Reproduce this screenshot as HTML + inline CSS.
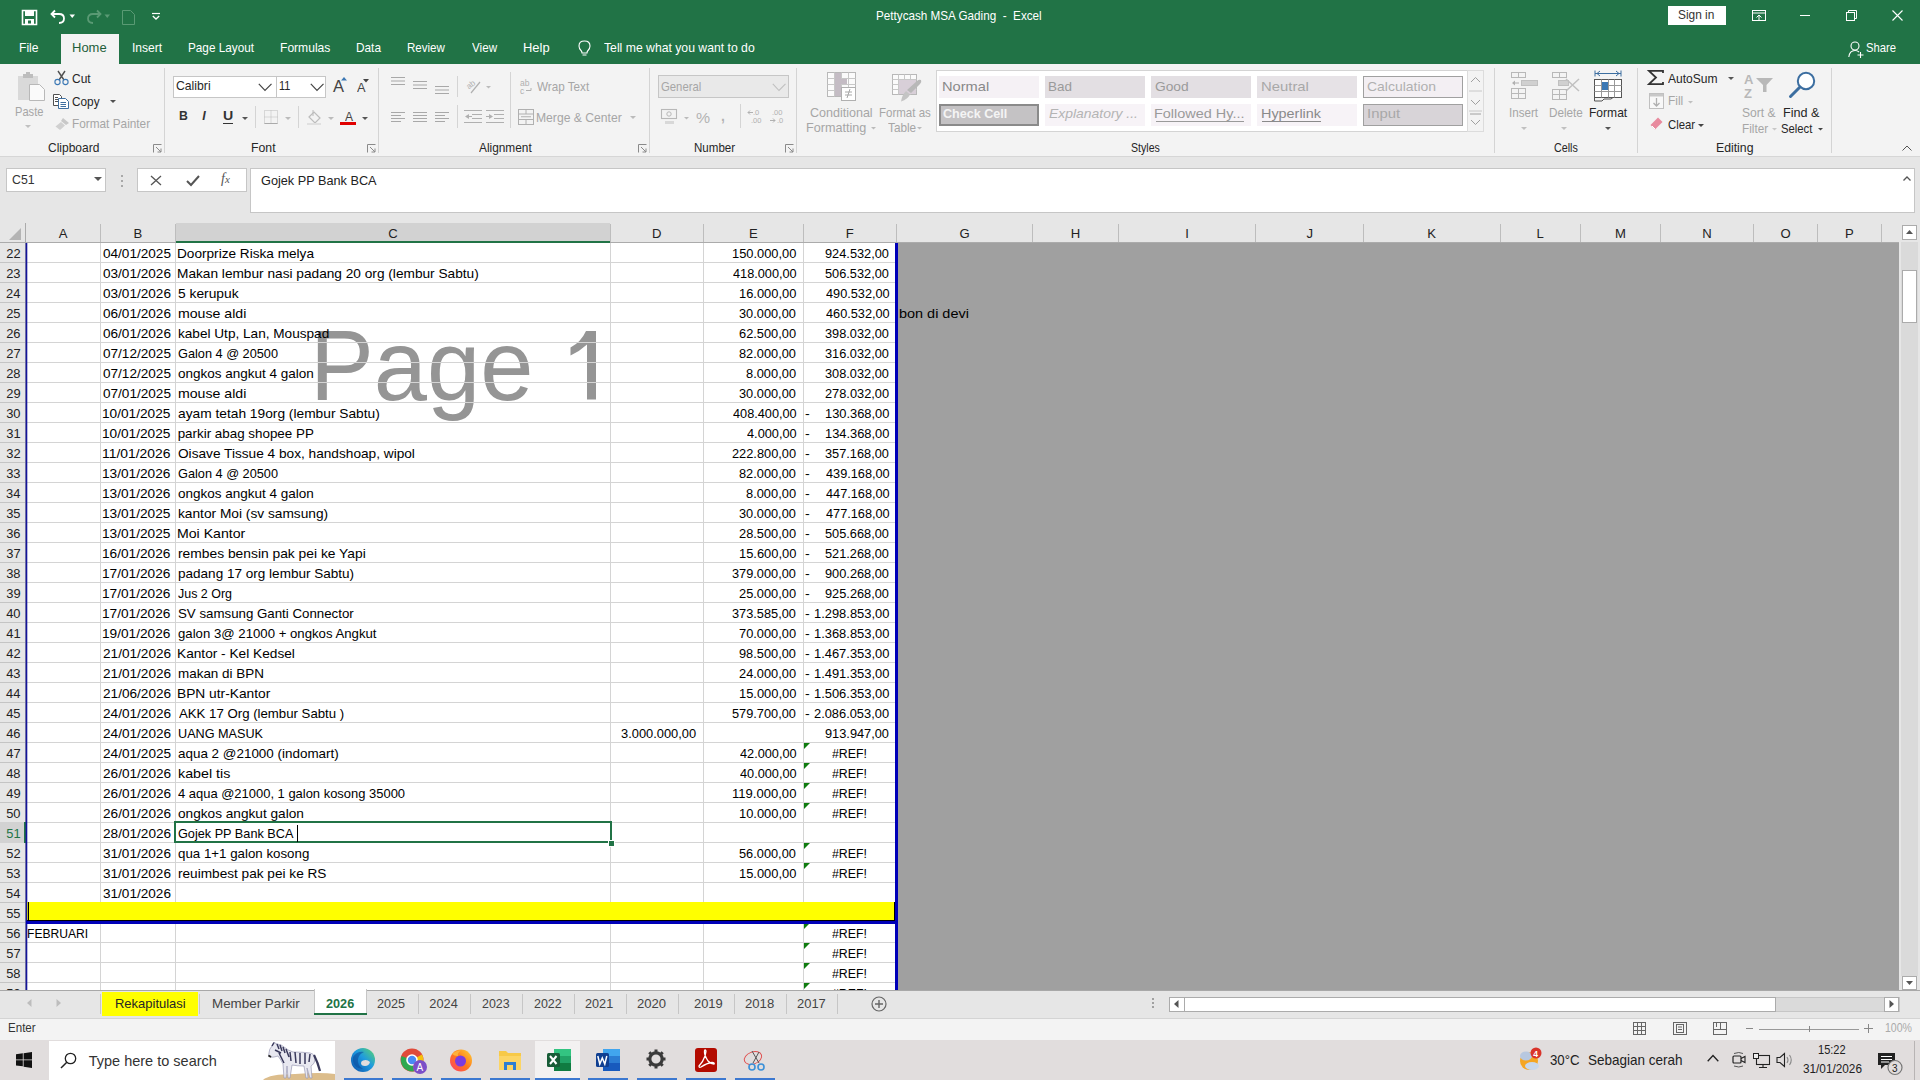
<!DOCTYPE html><html><head><meta charset="utf-8"><style>
html,body{margin:0;padding:0;}
body{width:1920px;height:1080px;overflow:hidden;position:relative;background:#f3f3f3;font-family:"Liberation Sans",sans-serif;}
div{position:absolute;}
.t{position:absolute;white-space:pre;transform-origin:0 0;}
svg{position:absolute;overflow:visible}
</style></head><body>
<div style="left:0px;top:0px;width:1920px;height:64px;background:#217346;"></div>
<div style="left:61px;top:34px;width:58px;height:30px;background:#f3f3f3;"></div>
<div style="left:0px;top:64px;width:1920px;height:92px;background:#f3f3f3;"></div>
<div style="left:0px;top:156px;width:1920px;height:1px;background:#d6d6d6;"></div>
<div style="left:0px;top:157px;width:1920px;height:66px;background:#e6e6e6;"></div>
<div class="t" style="left:876.06px;top:9.66px;font-size:12.80px;line-height:12.80px;color:#ffffff;transform:scaleX(0.9135);">Pettycash MSA Gading  -  Excel</div>
<div style="left:1668px;top:6px;width:58px;height:19px;background:#ffffff;"></div>
<div class="t" style="left:1678.47px;top:9.42px;font-size:12.50px;line-height:12.50px;color:#333;transform:scaleX(0.9508);">Sign in</div>
<div class="t" style="left:19.03px;top:42.16px;font-size:12.80px;line-height:12.80px;color:#ffffff;transform:scaleX(0.9470);">File</div>
<div class="t" style="left:131.91px;top:42.16px;font-size:12.80px;line-height:12.80px;color:#ffffff;transform:scaleX(0.9420);">Insert</div>
<div class="t" style="left:188.06px;top:42.16px;font-size:12.80px;line-height:12.80px;color:#ffffff;transform:scaleX(0.9183);">Page Layout</div>
<div class="t" style="left:280.03px;top:42.16px;font-size:12.80px;line-height:12.80px;color:#ffffff;transform:scaleX(0.9441);">Formulas</div>
<div class="t" style="left:356.05px;top:42.16px;font-size:12.80px;line-height:12.80px;color:#ffffff;transform:scaleX(0.9236);">Data</div>
<div class="t" style="left:407.07px;top:42.16px;font-size:12.80px;line-height:12.80px;color:#ffffff;transform:scaleX(0.9033);">Review</div>
<div class="t" style="left:471.94px;top:42.16px;font-size:12.80px;line-height:12.80px;color:#ffffff;transform:scaleX(0.9105);">View</div>
<div class="t" style="left:522.97px;top:42.16px;font-size:12.80px;line-height:12.80px;color:#ffffff;transform:scaleX(1.0094);">Help</div>
<div class="t" style="left:603.76px;top:42.16px;font-size:12.80px;line-height:12.80px;color:#ffffff;transform:scaleX(0.9543);">Tell me what you want to do</div>
<div class="t" style="left:71.96px;top:42.16px;font-size:12.80px;line-height:12.80px;color:#1e5e3a;transform:scaleX(1.0150);">Home</div>
<div class="t" style="left:1866.49px;top:42.16px;font-size:12.80px;line-height:12.80px;color:#ffffff;transform:scaleX(0.8799);">Share</div>
<div class="t" style="left:48.40px;top:141.50px;font-size:12.40px;line-height:12.40px;color:#262626;transform:scaleX(0.9681);">Clipboard</div>
<div class="t" style="left:250.52px;top:141.50px;font-size:12.40px;line-height:12.40px;color:#262626;transform:scaleX(0.9896);">Font</div>
<div class="t" style="left:479.00px;top:141.50px;font-size:12.40px;line-height:12.40px;color:#262626;transform:scaleX(0.9572);">Alignment</div>
<div class="t" style="left:694.08px;top:141.50px;font-size:12.40px;line-height:12.40px;color:#262626;transform:scaleX(0.9323);">Number</div>
<div class="t" style="left:1130.52px;top:141.50px;font-size:12.40px;line-height:12.40px;color:#262626;transform:scaleX(0.8537);">Styles</div>
<div class="t" style="left:1553.96px;top:141.50px;font-size:12.40px;line-height:12.40px;color:#262626;transform:scaleX(0.8667);">Cells</div>
<div class="t" style="left:1715.62px;top:141.50px;font-size:12.40px;line-height:12.40px;color:#262626;transform:scaleX(0.9894);">Editing</div>
<div style="left:164px;top:68px;width:1px;height:85px;background:#d4d4d4;"></div>
<div style="left:378px;top:68px;width:1px;height:85px;background:#d4d4d4;"></div>
<div style="left:649px;top:68px;width:1px;height:85px;background:#d4d4d4;"></div>
<div style="left:796px;top:68px;width:1px;height:85px;background:#d4d4d4;"></div>
<div style="left:1494px;top:68px;width:1px;height:85px;background:#d4d4d4;"></div>
<div style="left:1637px;top:68px;width:1px;height:85px;background:#d4d4d4;"></div>
<div style="left:1831px;top:68px;width:1px;height:85px;background:#d4d4d4;"></div>
<div class="t" style="left:15.11px;top:106.00px;font-size:12.40px;line-height:12.40px;color:#a6a6a6;transform:scaleX(0.8961);">Paste</div>
<div class="t" style="left:72.40px;top:72.50px;font-size:12.40px;line-height:12.40px;color:#262626;transform:scaleX(0.9677);">Cut</div>
<div class="t" style="left:72.41px;top:95.50px;font-size:12.40px;line-height:12.40px;color:#262626;transform:scaleX(0.9529);">Copy</div>
<div class="t" style="left:72.05px;top:118.00px;font-size:12.40px;line-height:12.40px;color:#a6a6a6;transform:scaleX(0.9531);">Format Painter</div>
<div style="left:173px;top:76px;width:153px;height:22px;background:#ffffff;box-sizing:border-box;border:1px solid #c6c6c6;"></div>
<div style="left:276px;top:76px;width:1px;height:22px;background:#c6c6c6;"></div>
<div class="t" style="left:175.89px;top:80.33px;font-size:12.60px;line-height:12.60px;color:#262626;transform:scaleX(0.9705);">Calibri</div>
<div class="t" style="left:279.18px;top:80.33px;font-size:12.60px;line-height:12.60px;color:#262626;transform:scaleX(0.8674);">11</div>
<div class="t" style="left:536.94px;top:80.50px;font-size:12.40px;line-height:12.40px;color:#a6a6a6;transform:scaleX(0.9424);">Wrap Text</div>
<div class="t" style="left:536.03px;top:111.50px;font-size:12.40px;line-height:12.40px;color:#a6a6a6;transform:scaleX(0.9803);">Merge &amp; Center</div>
<div style="left:658px;top:75px;width:131px;height:23px;background:#e9e9e9;box-sizing:border-box;border:1px solid #c6c6c6;"></div>
<div class="t" style="left:661.43px;top:80.70px;font-size:12.40px;line-height:12.40px;color:#a6a6a6;transform:scaleX(0.9143);">General</div>
<div class="t" style="left:809.77px;top:106.50px;font-size:12.40px;line-height:12.40px;color:#a6a6a6;transform:scaleX(1.0103);">Conditional</div>
<div class="t" style="left:805.99px;top:122.20px;font-size:12.40px;line-height:12.40px;color:#a6a6a6;transform:scaleX(1.0179);">Formatting</div>
<div class="t" style="left:879.08px;top:106.50px;font-size:12.40px;line-height:12.40px;color:#a6a6a6;transform:scaleX(0.9288);">Format as</div>
<div class="t" style="left:887.76px;top:122.20px;font-size:12.40px;line-height:12.40px;color:#a6a6a6;transform:scaleX(0.9504);">Table</div>
<div style="left:936px;top:70px;width:548px;height:62px;background:#ffffff;box-sizing:border-box;border:1px solid #d4d4d4;"></div>
<div style="left:939px;top:76px;width:100px;height:22px;background:#f5f1f5;box-sizing:border-box;"></div>
<div class="t" style="left:942.23px;top:80.53px;font-size:12.60px;line-height:12.60px;color:#888;transform:scaleX(1.1614);">Normal</div>
<div style="left:1045px;top:76px;width:100px;height:22px;background:#e3dfe3;box-sizing:border-box;"></div>
<div class="t" style="left:1048.12px;top:80.53px;font-size:12.60px;line-height:12.60px;color:#9a9a9a;transform:scaleX(1.0679);">Bad</div>
<div style="left:1151px;top:76px;width:100px;height:22px;background:#e3dfe3;box-sizing:border-box;"></div>
<div class="t" style="left:1154.71px;top:80.53px;font-size:12.60px;line-height:12.60px;color:#9a9a9a;transform:scaleX(1.0934);">Good</div>
<div style="left:1257px;top:76px;width:100px;height:22px;background:#e6e2e6;box-sizing:border-box;"></div>
<div class="t" style="left:1260.51px;top:80.53px;font-size:12.60px;line-height:12.60px;color:#a8a8a8;transform:scaleX(1.1795);">Neutral</div>
<div style="left:1363px;top:76px;width:100px;height:22px;background:#f3eff3;box-sizing:border-box;border:1px solid #a0a0a0;"></div>
<div class="t" style="left:1367.20px;top:80.53px;font-size:12.60px;line-height:12.60px;color:#b0b0b0;transform:scaleX(1.1091);">Calculation</div>
<div style="left:939px;top:104px;width:100px;height:22px;background:#c4c2c4;box-sizing:border-box;border:2px double #8a8a8a;"></div>
<div class="t" style="left:942.89px;top:108.43px;font-size:12.60px;line-height:12.60px;color:#f4f4f4;font-weight:bold;">Check Cell</div>
<div style="left:1045px;top:104px;width:100px;height:22px;background:#f7f3f7;box-sizing:border-box;"></div>
<div class="t" style="left:1049.18px;top:108.43px;font-size:12.60px;line-height:12.60px;color:#b4b4b4;font-style:italic;transform:scaleX(1.1053);">Explanatory ...</div>
<div style="left:1151px;top:104px;width:100px;height:22px;background:#f7f3f7;box-sizing:border-box;"></div>
<div class="t" style="left:1154.34px;top:108.43px;font-size:12.60px;line-height:12.60px;color:#9a9a9a;transform:scaleX(1.1468);">Followed Hy...</div>
<div style="left:1155.5px;top:121.1px;width:88.0px;height:1px;background:#9a9a9a;"></div>
<div style="left:1257px;top:104px;width:100px;height:22px;background:#f7f3f7;box-sizing:border-box;"></div>
<div class="t" style="left:1260.55px;top:108.43px;font-size:12.60px;line-height:12.60px;color:#8a8a8a;transform:scaleX(1.1429);">Hyperlink</div>
<div style="left:1261.7px;top:121.1px;width:58.899999999999864px;height:1px;background:#8a8a8a;"></div>
<div style="left:1363px;top:104px;width:100px;height:22px;background:#d8d4d8;box-sizing:border-box;border:1px solid #a0a0a0;"></div>
<div class="t" style="left:1366.56px;top:108.43px;font-size:12.60px;line-height:12.60px;color:#a8a8a8;transform:scaleX(1.1839);">Input</div>
<div style="left:1467px;top:70px;width:17px;height:62px;background:#f3f3f3;box-sizing:border-box;border:1px solid #dcdcdc;"></div>
<svg style="position:absolute;left:1467px;top:70px;" width="17" height="62" viewBox="0 0 17 62"><path d="M4 12 L8.5 7.5 L13 12" stroke="#a0a0a0" fill="none"/><path d="M4 30 L8.5 34.5 L13 30" stroke="#a0a0a0" fill="none"/><line x1="2" y1="21" x2="15" y2="21" stroke="#c8c8c8"/><line x1="2" y1="41" x2="15" y2="41" stroke="#c8c8c8"/><line x1="3" y1="44" x2="14" y2="44" stroke="#a0a0a0"/><path d="M4 50 L8.5 54.5 L13 50" stroke="#a0a0a0" fill="none"/></svg>
<div class="t" style="left:1508.66px;top:106.50px;font-size:12.40px;line-height:12.40px;color:#a6a6a6;transform:scaleX(0.9356);">Insert</div>
<div class="t" style="left:1548.66px;top:106.50px;font-size:12.40px;line-height:12.40px;color:#a6a6a6;transform:scaleX(0.9450);">Delete</div>
<div class="t" style="left:1588.63px;top:106.50px;font-size:12.40px;line-height:12.40px;color:#262626;transform:scaleX(0.9740);">Format</div>
<div class="t" style="left:1668.40px;top:72.50px;font-size:12.40px;line-height:12.40px;color:#262626;transform:scaleX(0.9737);">AutoSum</div>
<div class="t" style="left:1667.54px;top:94.50px;font-size:12.40px;line-height:12.40px;color:#a6a6a6;transform:scaleX(0.9635);">Fill</div>
<div class="t" style="left:1667.83px;top:118.50px;font-size:12.40px;line-height:12.40px;color:#262626;transform:scaleX(0.9142);">Clear</div>
<div class="t" style="left:1742.26px;top:106.50px;font-size:12.40px;line-height:12.40px;color:#a6a6a6;transform:scaleX(0.9743);">Sort &amp;</div>
<div class="t" style="left:1742.06px;top:122.50px;font-size:12.40px;line-height:12.40px;color:#a6a6a6;transform:scaleX(0.9488);">Filter</div>
<div class="t" style="left:1783.39px;top:106.50px;font-size:12.40px;line-height:12.40px;color:#262626;transform:scaleX(1.0185);">Find &amp;</div>
<div class="t" style="left:1781.49px;top:122.50px;font-size:12.40px;line-height:12.40px;color:#262626;transform:scaleX(0.9115);">Select</div>
<div style="left:6px;top:168px;width:100px;height:24px;background:#fff;box-sizing:border-box;border:1px solid #c6c6c6;"></div>
<div style="left:137px;top:168px;width:110px;height:24px;background:#fff;box-sizing:border-box;border:1px solid #c6c6c6;"></div>
<div style="left:250px;top:168px;width:1665px;height:45px;background:#fff;box-sizing:border-box;border:1px solid #c6c6c6;"></div>
<div style="left:0px;top:223px;width:1899px;height:20px;background:#e6e6e6;"></div>
<div style="left:0px;top:243px;width:26px;height:747px;background:#e6e6e6;"></div>
<div style="left:26px;top:243px;width:870px;height:747px;background:#ffffff;"></div>
<div class="t" style="left:309.84px;top:315.35px;font-size:100.00px;line-height:100.00px;color:#959595;transform:scaleX(0.9570);">Page</div>
<svg style="position:absolute;left:560px;top:320px;" width="50" height="90" viewBox="0 0 50 90"><path d="M27 11 L36 11 L36 79.6 L27 79.6 L27 24.5 Q20 31 10.5 35.6 L10.5 27.6 Q21 22 26 11 Z" fill="#959595"/></svg>
<div style="left:898px;top:243px;width:1001px;height:747px;background:#a0a0a0;"></div>
<div style="left:1899px;top:223px;width:21px;height:767px;background:#e6e6e6;"></div>
<div style="left:26px;top:262px;width:870px;height:1px;background:#d4d4d4;"></div>
<div style="left:0px;top:262px;width:25px;height:1px;background:#c4c4c4;"></div>
<div style="left:26px;top:282px;width:870px;height:1px;background:#d4d4d4;"></div>
<div style="left:0px;top:282px;width:25px;height:1px;background:#c4c4c4;"></div>
<div style="left:26px;top:302px;width:870px;height:1px;background:#d4d4d4;"></div>
<div style="left:0px;top:302px;width:25px;height:1px;background:#c4c4c4;"></div>
<div style="left:26px;top:322px;width:870px;height:1px;background:#d4d4d4;"></div>
<div style="left:0px;top:322px;width:25px;height:1px;background:#c4c4c4;"></div>
<div style="left:26px;top:342px;width:870px;height:1px;background:#d4d4d4;"></div>
<div style="left:0px;top:342px;width:25px;height:1px;background:#c4c4c4;"></div>
<div style="left:26px;top:362px;width:870px;height:1px;background:#d4d4d4;"></div>
<div style="left:0px;top:362px;width:25px;height:1px;background:#c4c4c4;"></div>
<div style="left:26px;top:382px;width:870px;height:1px;background:#d4d4d4;"></div>
<div style="left:0px;top:382px;width:25px;height:1px;background:#c4c4c4;"></div>
<div style="left:26px;top:402px;width:870px;height:1px;background:#d4d4d4;"></div>
<div style="left:0px;top:402px;width:25px;height:1px;background:#c4c4c4;"></div>
<div style="left:26px;top:422px;width:870px;height:1px;background:#d4d4d4;"></div>
<div style="left:0px;top:422px;width:25px;height:1px;background:#c4c4c4;"></div>
<div style="left:26px;top:442px;width:870px;height:1px;background:#d4d4d4;"></div>
<div style="left:0px;top:442px;width:25px;height:1px;background:#c4c4c4;"></div>
<div style="left:26px;top:462px;width:870px;height:1px;background:#d4d4d4;"></div>
<div style="left:0px;top:462px;width:25px;height:1px;background:#c4c4c4;"></div>
<div style="left:26px;top:482px;width:870px;height:1px;background:#d4d4d4;"></div>
<div style="left:0px;top:482px;width:25px;height:1px;background:#c4c4c4;"></div>
<div style="left:26px;top:502px;width:870px;height:1px;background:#d4d4d4;"></div>
<div style="left:0px;top:502px;width:25px;height:1px;background:#c4c4c4;"></div>
<div style="left:26px;top:522px;width:870px;height:1px;background:#d4d4d4;"></div>
<div style="left:0px;top:522px;width:25px;height:1px;background:#c4c4c4;"></div>
<div style="left:26px;top:542px;width:870px;height:1px;background:#d4d4d4;"></div>
<div style="left:0px;top:542px;width:25px;height:1px;background:#c4c4c4;"></div>
<div style="left:26px;top:562px;width:870px;height:1px;background:#d4d4d4;"></div>
<div style="left:0px;top:562px;width:25px;height:1px;background:#c4c4c4;"></div>
<div style="left:26px;top:582px;width:870px;height:1px;background:#d4d4d4;"></div>
<div style="left:0px;top:582px;width:25px;height:1px;background:#c4c4c4;"></div>
<div style="left:26px;top:602px;width:870px;height:1px;background:#d4d4d4;"></div>
<div style="left:0px;top:602px;width:25px;height:1px;background:#c4c4c4;"></div>
<div style="left:26px;top:622px;width:870px;height:1px;background:#d4d4d4;"></div>
<div style="left:0px;top:622px;width:25px;height:1px;background:#c4c4c4;"></div>
<div style="left:26px;top:642px;width:870px;height:1px;background:#d4d4d4;"></div>
<div style="left:0px;top:642px;width:25px;height:1px;background:#c4c4c4;"></div>
<div style="left:26px;top:662px;width:870px;height:1px;background:#d4d4d4;"></div>
<div style="left:0px;top:662px;width:25px;height:1px;background:#c4c4c4;"></div>
<div style="left:26px;top:682px;width:870px;height:1px;background:#d4d4d4;"></div>
<div style="left:0px;top:682px;width:25px;height:1px;background:#c4c4c4;"></div>
<div style="left:26px;top:702px;width:870px;height:1px;background:#d4d4d4;"></div>
<div style="left:0px;top:702px;width:25px;height:1px;background:#c4c4c4;"></div>
<div style="left:26px;top:722px;width:870px;height:1px;background:#d4d4d4;"></div>
<div style="left:0px;top:722px;width:25px;height:1px;background:#c4c4c4;"></div>
<div style="left:26px;top:742px;width:870px;height:1px;background:#d4d4d4;"></div>
<div style="left:0px;top:742px;width:25px;height:1px;background:#c4c4c4;"></div>
<div style="left:26px;top:762px;width:870px;height:1px;background:#d4d4d4;"></div>
<div style="left:0px;top:762px;width:25px;height:1px;background:#c4c4c4;"></div>
<div style="left:26px;top:782px;width:870px;height:1px;background:#d4d4d4;"></div>
<div style="left:0px;top:782px;width:25px;height:1px;background:#c4c4c4;"></div>
<div style="left:26px;top:802px;width:870px;height:1px;background:#d4d4d4;"></div>
<div style="left:0px;top:802px;width:25px;height:1px;background:#c4c4c4;"></div>
<div style="left:26px;top:822px;width:870px;height:1px;background:#d4d4d4;"></div>
<div style="left:0px;top:822px;width:25px;height:1px;background:#c4c4c4;"></div>
<div style="left:26px;top:842px;width:870px;height:1px;background:#d4d4d4;"></div>
<div style="left:0px;top:842px;width:25px;height:1px;background:#c4c4c4;"></div>
<div style="left:26px;top:862px;width:870px;height:1px;background:#d4d4d4;"></div>
<div style="left:0px;top:862px;width:25px;height:1px;background:#c4c4c4;"></div>
<div style="left:26px;top:882px;width:870px;height:1px;background:#d4d4d4;"></div>
<div style="left:0px;top:882px;width:25px;height:1px;background:#c4c4c4;"></div>
<div style="left:26px;top:902px;width:870px;height:1px;background:#d4d4d4;"></div>
<div style="left:0px;top:902px;width:25px;height:1px;background:#c4c4c4;"></div>
<div style="left:26px;top:922px;width:870px;height:1px;background:#d4d4d4;"></div>
<div style="left:0px;top:922px;width:25px;height:1px;background:#c4c4c4;"></div>
<div style="left:26px;top:942px;width:870px;height:1px;background:#d4d4d4;"></div>
<div style="left:0px;top:942px;width:25px;height:1px;background:#c4c4c4;"></div>
<div style="left:26px;top:962px;width:870px;height:1px;background:#d4d4d4;"></div>
<div style="left:0px;top:962px;width:25px;height:1px;background:#c4c4c4;"></div>
<div style="left:26px;top:982px;width:870px;height:1px;background:#d4d4d4;"></div>
<div style="left:0px;top:982px;width:25px;height:1px;background:#c4c4c4;"></div>
<div style="left:100px;top:243px;width:1px;height:747px;background:#d4d4d4;"></div>
<div style="left:175px;top:243px;width:1px;height:747px;background:#d4d4d4;"></div>
<div style="left:610px;top:243px;width:1px;height:747px;background:#d4d4d4;"></div>
<div style="left:703px;top:243px;width:1px;height:747px;background:#d4d4d4;"></div>
<div style="left:803px;top:243px;width:1px;height:747px;background:#d4d4d4;"></div>
<div style="left:25px;top:223px;width:1px;height:767px;background:#ababab;"></div>
<div style="left:100px;top:224px;width:1px;height:19px;background:#bdbdbd;"></div>
<div style="left:175px;top:224px;width:1px;height:19px;background:#bdbdbd;"></div>
<div style="left:610px;top:224px;width:1px;height:19px;background:#bdbdbd;"></div>
<div style="left:703px;top:224px;width:1px;height:19px;background:#bdbdbd;"></div>
<div style="left:803px;top:224px;width:1px;height:19px;background:#bdbdbd;"></div>
<div style="left:896px;top:224px;width:1px;height:19px;background:#bdbdbd;"></div>
<div style="left:1032px;top:224px;width:1px;height:19px;background:#bdbdbd;"></div>
<div style="left:1118px;top:224px;width:1px;height:19px;background:#bdbdbd;"></div>
<div style="left:1255px;top:224px;width:1px;height:19px;background:#bdbdbd;"></div>
<div style="left:1363px;top:224px;width:1px;height:19px;background:#bdbdbd;"></div>
<div style="left:1500px;top:224px;width:1px;height:19px;background:#bdbdbd;"></div>
<div style="left:1580px;top:224px;width:1px;height:19px;background:#bdbdbd;"></div>
<div style="left:1660px;top:224px;width:1px;height:19px;background:#bdbdbd;"></div>
<div style="left:1753px;top:224px;width:1px;height:19px;background:#bdbdbd;"></div>
<div style="left:1817px;top:224px;width:1px;height:19px;background:#bdbdbd;"></div>
<div style="left:1881px;top:224px;width:1px;height:19px;background:#bdbdbd;"></div>
<div style="left:0px;top:242px;width:1899px;height:1px;background:#ababab;"></div>
<div style="left:176px;top:223px;width:434px;height:18px;background:#d2d2d2;"></div>
<div style="left:176px;top:241px;width:434px;height:2px;background:#217346;"></div>
<svg style="position:absolute;left:0px;top:223px;" width="25" height="20" viewBox="0 0 25 20"><path d="M9 17 L21 17 L21 5 Z" fill="#b4b4b4"/></svg>
<div class="t" style="left:58.64px;top:226.91px;font-size:13.10px;line-height:13.10px;color:#222;">A</div>
<div class="t" style="left:133.45px;top:226.91px;font-size:13.10px;line-height:13.10px;color:#222;">B</div>
<div class="t" style="left:388.19px;top:226.91px;font-size:13.10px;line-height:13.10px;color:#222;">C</div>
<div class="t" style="left:652.05px;top:226.91px;font-size:13.10px;line-height:13.10px;color:#222;">D</div>
<div class="t" style="left:748.88px;top:226.91px;font-size:13.10px;line-height:13.10px;color:#222;">E</div>
<div class="t" style="left:845.74px;top:226.91px;font-size:13.10px;line-height:13.10px;color:#222;">F</div>
<div class="t" style="left:959.55px;top:226.91px;font-size:13.10px;line-height:13.10px;color:#222;">G</div>
<div class="t" style="left:1070.78px;top:226.91px;font-size:13.10px;line-height:13.10px;color:#222;">H</div>
<div class="t" style="left:1185.20px;top:226.91px;font-size:13.10px;line-height:13.10px;color:#222;">I</div>
<div class="t" style="left:1306.62px;top:226.91px;font-size:13.10px;line-height:13.10px;color:#222;">J</div>
<div class="t" style="left:1427.19px;top:226.91px;font-size:13.10px;line-height:13.10px;color:#222;">K</div>
<div class="t" style="left:1536.54px;top:226.91px;font-size:13.10px;line-height:13.10px;color:#222;">L</div>
<div class="t" style="left:1615.06px;top:226.91px;font-size:13.10px;line-height:13.10px;color:#222;">M</div>
<div class="t" style="left:1702.28px;top:226.91px;font-size:13.10px;line-height:13.10px;color:#222;">N</div>
<div class="t" style="left:1780.42px;top:226.91px;font-size:13.10px;line-height:13.10px;color:#222;">O</div>
<div class="t" style="left:1844.95px;top:226.91px;font-size:13.10px;line-height:13.10px;color:#222;">P</div>
<div class="t" style="left:6.33px;top:248.08px;font-size:12.90px;line-height:12.90px;color:#222;">22</div>
<div class="t" style="left:6.20px;top:268.08px;font-size:12.90px;line-height:12.90px;color:#222;">23</div>
<div class="t" style="left:6.07px;top:288.08px;font-size:12.90px;line-height:12.90px;color:#222;">24</div>
<div class="t" style="left:6.20px;top:308.08px;font-size:12.90px;line-height:12.90px;color:#222;">25</div>
<div class="t" style="left:6.20px;top:328.08px;font-size:12.90px;line-height:12.90px;color:#222;">26</div>
<div class="t" style="left:6.33px;top:348.08px;font-size:12.90px;line-height:12.90px;color:#222;">27</div>
<div class="t" style="left:6.20px;top:368.08px;font-size:12.90px;line-height:12.90px;color:#222;">28</div>
<div class="t" style="left:6.26px;top:388.08px;font-size:12.90px;line-height:12.90px;color:#222;">29</div>
<div class="t" style="left:6.13px;top:408.08px;font-size:12.90px;line-height:12.90px;color:#222;">30</div>
<div class="t" style="left:6.26px;top:428.08px;font-size:12.90px;line-height:12.90px;color:#222;">31</div>
<div class="t" style="left:6.33px;top:448.08px;font-size:12.90px;line-height:12.90px;color:#222;">32</div>
<div class="t" style="left:6.20px;top:468.08px;font-size:12.90px;line-height:12.90px;color:#222;">33</div>
<div class="t" style="left:6.07px;top:488.08px;font-size:12.90px;line-height:12.90px;color:#222;">34</div>
<div class="t" style="left:6.20px;top:508.08px;font-size:12.90px;line-height:12.90px;color:#222;">35</div>
<div class="t" style="left:6.20px;top:528.08px;font-size:12.90px;line-height:12.90px;color:#222;">36</div>
<div class="t" style="left:6.33px;top:548.08px;font-size:12.90px;line-height:12.90px;color:#222;">37</div>
<div class="t" style="left:6.20px;top:568.08px;font-size:12.90px;line-height:12.90px;color:#222;">38</div>
<div class="t" style="left:6.26px;top:588.08px;font-size:12.90px;line-height:12.90px;color:#222;">39</div>
<div class="t" style="left:6.13px;top:608.08px;font-size:12.90px;line-height:12.90px;color:#222;">40</div>
<div class="t" style="left:6.26px;top:628.08px;font-size:12.90px;line-height:12.90px;color:#222;">41</div>
<div class="t" style="left:6.33px;top:648.08px;font-size:12.90px;line-height:12.90px;color:#222;">42</div>
<div class="t" style="left:6.20px;top:668.08px;font-size:12.90px;line-height:12.90px;color:#222;">43</div>
<div class="t" style="left:6.07px;top:688.08px;font-size:12.90px;line-height:12.90px;color:#222;">44</div>
<div class="t" style="left:6.20px;top:708.08px;font-size:12.90px;line-height:12.90px;color:#222;">45</div>
<div class="t" style="left:6.20px;top:728.08px;font-size:12.90px;line-height:12.90px;color:#222;">46</div>
<div class="t" style="left:6.33px;top:748.08px;font-size:12.90px;line-height:12.90px;color:#222;">47</div>
<div class="t" style="left:6.20px;top:768.08px;font-size:12.90px;line-height:12.90px;color:#222;">48</div>
<div class="t" style="left:6.26px;top:788.08px;font-size:12.90px;line-height:12.90px;color:#222;">49</div>
<div class="t" style="left:6.13px;top:808.08px;font-size:12.90px;line-height:12.90px;color:#222;">50</div>
<div style="left:0px;top:822px;width:24px;height:21px;background:#d2d2d2;"></div>
<div style="left:24px;top:822px;width:2px;height:21px;background:#217346;"></div>
<div class="t" style="left:6.26px;top:828.08px;font-size:12.90px;line-height:12.90px;color:#217346;">51</div>
<div class="t" style="left:6.33px;top:848.08px;font-size:12.90px;line-height:12.90px;color:#222;">52</div>
<div class="t" style="left:6.20px;top:868.08px;font-size:12.90px;line-height:12.90px;color:#222;">53</div>
<div class="t" style="left:6.07px;top:888.08px;font-size:12.90px;line-height:12.90px;color:#222;">54</div>
<div class="t" style="left:6.20px;top:908.08px;font-size:12.90px;line-height:12.90px;color:#222;">55</div>
<div class="t" style="left:6.20px;top:928.08px;font-size:12.90px;line-height:12.90px;color:#222;">56</div>
<div class="t" style="left:6.33px;top:948.08px;font-size:12.90px;line-height:12.90px;color:#222;">57</div>
<div class="t" style="left:6.20px;top:968.08px;font-size:12.90px;line-height:12.90px;color:#222;">58</div>
<div class="t" style="left:6.26px;top:988.08px;font-size:12.90px;line-height:12.90px;color:#222;">59</div>
<div style="left:26px;top:902px;width:869px;height:19px;background:#ffff00;"></div>
<div style="left:26px;top:920px;width:869px;height:1px;background:#000;"></div>
<div style="left:894px;top:902px;width:1px;height:19px;background:#000;"></div>
<div style="left:28px;top:902px;width:1px;height:19px;background:#000;"></div>
<div class="t" style="left:102.96px;top:246.66px;font-size:13.40px;line-height:13.40px;color:#000;transform:scaleX(1.0137);">04/01/2025</div>
<div class="t" style="left:177.41px;top:246.66px;font-size:13.40px;line-height:13.40px;color:#000;transform:scaleX(1.0170);">Doorprize Riska melya</div>
<div class="t" style="left:732.03px;top:246.66px;font-size:13.40px;line-height:13.40px;color:#000;transform:scaleX(0.9605);">150.000,00</div>
<div class="t" style="left:825.42px;top:246.66px;font-size:13.40px;line-height:13.40px;color:#000;transform:scaleX(0.9546);">924.532,00</div>
<div class="t" style="left:102.96px;top:266.66px;font-size:13.40px;line-height:13.40px;color:#000;transform:scaleX(1.0137);">03/01/2026</div>
<div class="t" style="left:177.41px;top:266.66px;font-size:13.40px;line-height:13.40px;color:#000;transform:scaleX(1.0211);">Makan lembur nasi padang 20 org (lembur Sabtu)</div>
<div class="t" style="left:732.75px;top:266.66px;font-size:13.40px;line-height:13.40px;color:#000;transform:scaleX(0.9498);">418.000,00</div>
<div class="t" style="left:825.49px;top:266.66px;font-size:13.40px;line-height:13.40px;color:#000;transform:scaleX(0.9536);">506.532,00</div>
<div class="t" style="left:102.96px;top:286.66px;font-size:13.40px;line-height:13.40px;color:#000;transform:scaleX(1.0137);">03/01/2026</div>
<div class="t" style="left:177.95px;top:286.66px;font-size:13.40px;line-height:13.40px;color:#000;transform:scaleX(1.0293);">5 kerupuk</div>
<div class="t" style="left:739.03px;top:286.66px;font-size:13.40px;line-height:13.40px;color:#000;transform:scaleX(0.9629);">16.000,00</div>
<div class="t" style="left:825.75px;top:286.66px;font-size:13.40px;line-height:13.40px;color:#000;transform:scaleX(0.9498);">490.532,00</div>
<div class="t" style="left:102.96px;top:306.66px;font-size:13.40px;line-height:13.40px;color:#000;transform:scaleX(1.0137);">06/01/2026</div>
<div class="t" style="left:177.58px;top:306.66px;font-size:13.40px;line-height:13.40px;color:#000;transform:scaleX(1.0548);">mouse aldi</div>
<div class="t" style="left:739.49px;top:306.66px;font-size:13.40px;line-height:13.40px;color:#000;transform:scaleX(0.9552);">30.000,00</div>
<div class="t" style="left:825.75px;top:306.66px;font-size:13.40px;line-height:13.40px;color:#000;transform:scaleX(0.9498);">460.532,00</div>
<div class="t" style="left:102.96px;top:326.66px;font-size:13.40px;line-height:13.40px;color:#000;transform:scaleX(1.0137);">06/01/2026</div>
<div class="t" style="left:177.62px;top:326.66px;font-size:13.40px;line-height:13.40px;color:#000;transform:scaleX(1.0156);">kabel Utp, Lan, Mouspad</div>
<div class="t" style="left:739.36px;top:326.66px;font-size:13.40px;line-height:13.40px;color:#000;transform:scaleX(0.9574);">62.500,00</div>
<div class="t" style="left:825.49px;top:326.66px;font-size:13.40px;line-height:13.40px;color:#000;transform:scaleX(0.9536);">398.032,00</div>
<div class="t" style="left:102.96px;top:346.66px;font-size:13.40px;line-height:13.40px;color:#000;transform:scaleX(1.0137);">07/12/2025</div>
<div class="t" style="left:177.86px;top:346.66px;font-size:13.40px;line-height:13.40px;color:#000;transform:scaleX(0.9508);">Galon 4 @ 20500</div>
<div class="t" style="left:739.42px;top:346.66px;font-size:13.40px;line-height:13.40px;color:#000;transform:scaleX(0.9563);">82.000,00</div>
<div class="t" style="left:825.49px;top:346.66px;font-size:13.40px;line-height:13.40px;color:#000;transform:scaleX(0.9536);">316.032,00</div>
<div class="t" style="left:102.96px;top:366.66px;font-size:13.40px;line-height:13.40px;color:#000;transform:scaleX(1.0137);">07/12/2025</div>
<div class="t" style="left:177.96px;top:366.66px;font-size:13.40px;line-height:13.40px;color:#000;transform:scaleX(1.0078);">ongkos angkut 4 galon</div>
<div class="t" style="left:746.42px;top:366.66px;font-size:13.40px;line-height:13.40px;color:#000;transform:scaleX(0.9598);">8.000,00</div>
<div class="t" style="left:825.49px;top:366.66px;font-size:13.40px;line-height:13.40px;color:#000;transform:scaleX(0.9536);">308.032,00</div>
<div class="t" style="left:102.96px;top:386.66px;font-size:13.40px;line-height:13.40px;color:#000;transform:scaleX(1.0137);">07/01/2025</div>
<div class="t" style="left:177.58px;top:386.66px;font-size:13.40px;line-height:13.40px;color:#000;transform:scaleX(1.0548);">mouse aldi</div>
<div class="t" style="left:739.49px;top:386.66px;font-size:13.40px;line-height:13.40px;color:#000;transform:scaleX(0.9552);">30.000,00</div>
<div class="t" style="left:825.36px;top:386.66px;font-size:13.40px;line-height:13.40px;color:#000;transform:scaleX(0.9556);">278.032,00</div>
<div class="t" style="left:102.47px;top:406.66px;font-size:13.40px;line-height:13.40px;color:#000;transform:scaleX(1.0210);">10/01/2025</div>
<div class="t" style="left:177.95px;top:406.66px;font-size:13.40px;line-height:13.40px;color:#000;transform:scaleX(1.0270);">ayam tetah 19org (lembur Sabtu)</div>
<div class="t" style="left:732.75px;top:406.66px;font-size:13.40px;line-height:13.40px;color:#000;transform:scaleX(0.9498);">408.400,00</div>
<div class="t" style="left:825.03px;top:406.66px;font-size:13.40px;line-height:13.40px;color:#000;transform:scaleX(0.9605);">130.368,00</div>
<div class="t" style="left:805.36px;top:406.66px;font-size:13.40px;line-height:13.40px;color:#000;transform:scaleX(1.0661);">-</div>
<div class="t" style="left:102.47px;top:426.66px;font-size:13.40px;line-height:13.40px;color:#000;transform:scaleX(1.0210);">10/01/2025</div>
<div class="t" style="left:177.63px;top:426.66px;font-size:13.40px;line-height:13.40px;color:#000;">parkir abag shopee PP</div>
<div class="t" style="left:746.74px;top:426.66px;font-size:13.40px;line-height:13.40px;color:#000;transform:scaleX(0.9535);">4.000,00</div>
<div class="t" style="left:825.03px;top:426.66px;font-size:13.40px;line-height:13.40px;color:#000;transform:scaleX(0.9605);">134.368,00</div>
<div class="t" style="left:805.36px;top:426.66px;font-size:13.40px;line-height:13.40px;color:#000;transform:scaleX(1.0661);">-</div>
<div class="t" style="left:102.46px;top:446.66px;font-size:13.40px;line-height:13.40px;color:#000;transform:scaleX(1.0369);">11/01/2026</div>
<div class="t" style="left:177.88px;top:446.66px;font-size:13.40px;line-height:13.40px;color:#000;transform:scaleX(1.0200);">Oisave Tissue 4 box, handshoap, wipol</div>
<div class="t" style="left:732.36px;top:446.66px;font-size:13.40px;line-height:13.40px;color:#000;transform:scaleX(0.9556);">222.800,00</div>
<div class="t" style="left:825.49px;top:446.66px;font-size:13.40px;line-height:13.40px;color:#000;transform:scaleX(0.9536);">357.168,00</div>
<div class="t" style="left:805.36px;top:446.66px;font-size:13.40px;line-height:13.40px;color:#000;transform:scaleX(1.0661);">-</div>
<div class="t" style="left:102.47px;top:466.66px;font-size:13.40px;line-height:13.40px;color:#000;transform:scaleX(1.0210);">13/01/2026</div>
<div class="t" style="left:177.86px;top:466.66px;font-size:13.40px;line-height:13.40px;color:#000;transform:scaleX(0.9508);">Galon 4 @ 20500</div>
<div class="t" style="left:739.42px;top:466.66px;font-size:13.40px;line-height:13.40px;color:#000;transform:scaleX(0.9563);">82.000,00</div>
<div class="t" style="left:825.75px;top:466.66px;font-size:13.40px;line-height:13.40px;color:#000;transform:scaleX(0.9498);">439.168,00</div>
<div class="t" style="left:805.36px;top:466.66px;font-size:13.40px;line-height:13.40px;color:#000;transform:scaleX(1.0661);">-</div>
<div class="t" style="left:102.47px;top:486.66px;font-size:13.40px;line-height:13.40px;color:#000;transform:scaleX(1.0210);">13/01/2026</div>
<div class="t" style="left:177.96px;top:486.66px;font-size:13.40px;line-height:13.40px;color:#000;transform:scaleX(1.0078);">ongkos angkut 4 galon</div>
<div class="t" style="left:746.42px;top:486.66px;font-size:13.40px;line-height:13.40px;color:#000;transform:scaleX(0.9598);">8.000,00</div>
<div class="t" style="left:825.75px;top:486.66px;font-size:13.40px;line-height:13.40px;color:#000;transform:scaleX(0.9498);">447.168,00</div>
<div class="t" style="left:805.36px;top:486.66px;font-size:13.40px;line-height:13.40px;color:#000;transform:scaleX(1.0661);">-</div>
<div class="t" style="left:102.47px;top:506.66px;font-size:13.40px;line-height:13.40px;color:#000;transform:scaleX(1.0210);">13/01/2025</div>
<div class="t" style="left:177.61px;top:506.66px;font-size:13.40px;line-height:13.40px;color:#000;transform:scaleX(1.0242);">kantor Moi (sv samsung)</div>
<div class="t" style="left:739.49px;top:506.66px;font-size:13.40px;line-height:13.40px;color:#000;transform:scaleX(0.9552);">30.000,00</div>
<div class="t" style="left:825.75px;top:506.66px;font-size:13.40px;line-height:13.40px;color:#000;transform:scaleX(0.9498);">477.168,00</div>
<div class="t" style="left:805.36px;top:506.66px;font-size:13.40px;line-height:13.40px;color:#000;transform:scaleX(1.0661);">-</div>
<div class="t" style="left:102.47px;top:526.66px;font-size:13.40px;line-height:13.40px;color:#000;transform:scaleX(1.0210);">13/01/2025</div>
<div class="t" style="left:177.37px;top:526.66px;font-size:13.40px;line-height:13.40px;color:#000;transform:scaleX(1.0549);">Moi Kantor</div>
<div class="t" style="left:739.36px;top:526.66px;font-size:13.40px;line-height:13.40px;color:#000;transform:scaleX(0.9574);">28.500,00</div>
<div class="t" style="left:825.49px;top:526.66px;font-size:13.40px;line-height:13.40px;color:#000;transform:scaleX(0.9536);">505.668,00</div>
<div class="t" style="left:805.36px;top:526.66px;font-size:13.40px;line-height:13.40px;color:#000;transform:scaleX(1.0661);">-</div>
<div class="t" style="left:102.47px;top:546.66px;font-size:13.40px;line-height:13.40px;color:#000;transform:scaleX(1.0210);">16/01/2026</div>
<div class="t" style="left:177.60px;top:546.66px;font-size:13.40px;line-height:13.40px;color:#000;transform:scaleX(1.0320);">rembes bensin pak pei ke Yapi</div>
<div class="t" style="left:739.03px;top:546.66px;font-size:13.40px;line-height:13.40px;color:#000;transform:scaleX(0.9629);">15.600,00</div>
<div class="t" style="left:825.49px;top:546.66px;font-size:13.40px;line-height:13.40px;color:#000;transform:scaleX(0.9536);">521.268,00</div>
<div class="t" style="left:805.36px;top:546.66px;font-size:13.40px;line-height:13.40px;color:#000;transform:scaleX(1.0661);">-</div>
<div class="t" style="left:102.47px;top:566.66px;font-size:13.40px;line-height:13.40px;color:#000;transform:scaleX(1.0210);">17/01/2026</div>
<div class="t" style="left:177.62px;top:566.66px;font-size:13.40px;line-height:13.40px;color:#000;transform:scaleX(1.0111);">padang 17 org lembur Sabtu)</div>
<div class="t" style="left:732.49px;top:566.66px;font-size:13.40px;line-height:13.40px;color:#000;transform:scaleX(0.9536);">379.000,00</div>
<div class="t" style="left:825.42px;top:566.66px;font-size:13.40px;line-height:13.40px;color:#000;transform:scaleX(0.9546);">900.268,00</div>
<div class="t" style="left:805.36px;top:566.66px;font-size:13.40px;line-height:13.40px;color:#000;transform:scaleX(1.0661);">-</div>
<div class="t" style="left:102.47px;top:586.66px;font-size:13.40px;line-height:13.40px;color:#000;transform:scaleX(1.0210);">17/01/2026</div>
<div class="t" style="left:178.31px;top:586.66px;font-size:13.40px;line-height:13.40px;color:#000;transform:scaleX(0.9295);">Jus 2 Org</div>
<div class="t" style="left:739.36px;top:586.66px;font-size:13.40px;line-height:13.40px;color:#000;transform:scaleX(0.9574);">25.000,00</div>
<div class="t" style="left:825.42px;top:586.66px;font-size:13.40px;line-height:13.40px;color:#000;transform:scaleX(0.9546);">925.268,00</div>
<div class="t" style="left:805.36px;top:586.66px;font-size:13.40px;line-height:13.40px;color:#000;transform:scaleX(1.0661);">-</div>
<div class="t" style="left:102.47px;top:606.66px;font-size:13.40px;line-height:13.40px;color:#000;transform:scaleX(1.0210);">17/01/2026</div>
<div class="t" style="left:177.90px;top:606.66px;font-size:13.40px;line-height:13.40px;color:#000;transform:scaleX(0.9920);">SV samsung Ganti Connector</div>
<div class="t" style="left:732.49px;top:606.66px;font-size:13.40px;line-height:13.40px;color:#000;transform:scaleX(0.9536);">373.585,00</div>
<div class="t" style="left:814.03px;top:606.66px;font-size:13.40px;line-height:13.40px;color:#000;transform:scaleX(0.9638);">1.298.853,00</div>
<div class="t" style="left:805.36px;top:606.66px;font-size:13.40px;line-height:13.40px;color:#000;transform:scaleX(1.0661);">-</div>
<div class="t" style="left:102.47px;top:626.66px;font-size:13.40px;line-height:13.40px;color:#000;transform:scaleX(1.0210);">19/01/2026</div>
<div class="t" style="left:177.97px;top:626.66px;font-size:13.40px;line-height:13.40px;color:#000;transform:scaleX(0.9847);">galon 3@ 21000 + ongkos Angkut</div>
<div class="t" style="left:739.36px;top:626.66px;font-size:13.40px;line-height:13.40px;color:#000;transform:scaleX(0.9574);">70.000,00</div>
<div class="t" style="left:814.03px;top:626.66px;font-size:13.40px;line-height:13.40px;color:#000;transform:scaleX(0.9638);">1.368.853,00</div>
<div class="t" style="left:805.36px;top:626.66px;font-size:13.40px;line-height:13.40px;color:#000;transform:scaleX(1.0661);">-</div>
<div class="t" style="left:102.82px;top:646.66px;font-size:13.40px;line-height:13.40px;color:#000;transform:scaleX(1.0158);">21/01/2026</div>
<div class="t" style="left:177.40px;top:646.66px;font-size:13.40px;line-height:13.40px;color:#000;transform:scaleX(1.0220);">Kantor - Kel Kedsel</div>
<div class="t" style="left:739.42px;top:646.66px;font-size:13.40px;line-height:13.40px;color:#000;transform:scaleX(0.9563);">98.500,00</div>
<div class="t" style="left:814.03px;top:646.66px;font-size:13.40px;line-height:13.40px;color:#000;transform:scaleX(0.9638);">1.467.353,00</div>
<div class="t" style="left:805.36px;top:646.66px;font-size:13.40px;line-height:13.40px;color:#000;transform:scaleX(1.0661);">-</div>
<div class="t" style="left:102.82px;top:666.66px;font-size:13.40px;line-height:13.40px;color:#000;transform:scaleX(1.0158);">21/01/2026</div>
<div class="t" style="left:177.63px;top:666.66px;font-size:13.40px;line-height:13.40px;color:#000;transform:scaleX(1.0038);">makan di BPN</div>
<div class="t" style="left:739.36px;top:666.66px;font-size:13.40px;line-height:13.40px;color:#000;transform:scaleX(0.9574);">24.000,00</div>
<div class="t" style="left:814.03px;top:666.66px;font-size:13.40px;line-height:13.40px;color:#000;transform:scaleX(0.9638);">1.491.353,00</div>
<div class="t" style="left:805.36px;top:666.66px;font-size:13.40px;line-height:13.40px;color:#000;transform:scaleX(1.0661);">-</div>
<div class="t" style="left:102.82px;top:686.66px;font-size:13.40px;line-height:13.40px;color:#000;transform:scaleX(1.0158);">21/06/2026</div>
<div class="t" style="left:177.40px;top:686.66px;font-size:13.40px;line-height:13.40px;color:#000;transform:scaleX(1.0270);">BPN utr-Kantor</div>
<div class="t" style="left:739.03px;top:686.66px;font-size:13.40px;line-height:13.40px;color:#000;transform:scaleX(0.9629);">15.000,00</div>
<div class="t" style="left:814.03px;top:686.66px;font-size:13.40px;line-height:13.40px;color:#000;transform:scaleX(0.9638);">1.506.353,00</div>
<div class="t" style="left:805.36px;top:686.66px;font-size:13.40px;line-height:13.40px;color:#000;transform:scaleX(1.0661);">-</div>
<div class="t" style="left:102.82px;top:706.66px;font-size:13.40px;line-height:13.40px;color:#000;transform:scaleX(1.0158);">24/01/2026</div>
<div class="t" style="left:178.50px;top:706.66px;font-size:13.40px;line-height:13.40px;color:#000;transform:scaleX(0.9864);">AKK 17 Org (lembur Sabtu )</div>
<div class="t" style="left:732.49px;top:706.66px;font-size:13.40px;line-height:13.40px;color:#000;transform:scaleX(0.9536);">579.700,00</div>
<div class="t" style="left:814.36px;top:706.66px;font-size:13.40px;line-height:13.40px;color:#000;transform:scaleX(0.9596);">2.086.053,00</div>
<div class="t" style="left:805.36px;top:706.66px;font-size:13.40px;line-height:13.40px;color:#000;transform:scaleX(1.0661);">-</div>
<div class="t" style="left:102.82px;top:726.66px;font-size:13.40px;line-height:13.40px;color:#000;transform:scaleX(1.0158);">24/01/2026</div>
<div class="t" style="left:177.55px;top:726.66px;font-size:13.40px;line-height:13.40px;color:#000;transform:scaleX(0.9448);">UANG MASUK</div>
<div class="t" style="left:825.42px;top:726.66px;font-size:13.40px;line-height:13.40px;color:#000;transform:scaleX(0.9546);">913.947,00</div>
<div class="t" style="left:102.82px;top:746.66px;font-size:13.40px;line-height:13.40px;color:#000;transform:scaleX(1.0158);">24/01/2025</div>
<div class="t" style="left:177.96px;top:746.66px;font-size:13.40px;line-height:13.40px;color:#000;transform:scaleX(1.0032);">aqua 2 @21000 (indomart)</div>
<div class="t" style="left:739.75px;top:746.66px;font-size:13.40px;line-height:13.40px;color:#000;transform:scaleX(0.9509);">42.000,00</div>
<div class="t" style="left:832.44px;top:746.66px;font-size:13.40px;line-height:13.40px;color:#000;transform:scaleX(0.9223);">#REF!</div>
<svg style="position:absolute;left:804px;top:743px;" width="6" height="6" viewBox="0 0 6 6"><path d="M0 0 L6 0 L0 6 Z" fill="#107c10"/></svg>
<div class="t" style="left:102.82px;top:766.66px;font-size:13.40px;line-height:13.40px;color:#000;transform:scaleX(1.0158);">26/01/2026</div>
<div class="t" style="left:177.57px;top:766.66px;font-size:13.40px;line-height:13.40px;color:#000;transform:scaleX(1.0661);">kabel tis</div>
<div class="t" style="left:739.75px;top:766.66px;font-size:13.40px;line-height:13.40px;color:#000;transform:scaleX(0.9509);">40.000,00</div>
<div class="t" style="left:832.44px;top:766.66px;font-size:13.40px;line-height:13.40px;color:#000;transform:scaleX(0.9223);">#REF!</div>
<svg style="position:absolute;left:804px;top:763px;" width="6" height="6" viewBox="0 0 6 6"><path d="M0 0 L6 0 L0 6 Z" fill="#107c10"/></svg>
<div class="t" style="left:102.82px;top:786.66px;font-size:13.40px;line-height:13.40px;color:#000;transform:scaleX(1.0158);">26/01/2026</div>
<div class="t" style="left:178.24px;top:786.66px;font-size:13.40px;line-height:13.40px;color:#000;transform:scaleX(0.9673);">4 aqua @21000, 1 galon kosong 35000</div>
<div class="t" style="left:732.02px;top:786.66px;font-size:13.40px;line-height:13.40px;color:#000;transform:scaleX(0.9754);">119.000,00</div>
<div class="t" style="left:832.44px;top:786.66px;font-size:13.40px;line-height:13.40px;color:#000;transform:scaleX(0.9223);">#REF!</div>
<svg style="position:absolute;left:804px;top:783px;" width="6" height="6" viewBox="0 0 6 6"><path d="M0 0 L6 0 L0 6 Z" fill="#107c10"/></svg>
<div class="t" style="left:102.82px;top:806.66px;font-size:13.40px;line-height:13.40px;color:#000;transform:scaleX(1.0158);">26/01/2026</div>
<div class="t" style="left:177.95px;top:806.66px;font-size:13.40px;line-height:13.40px;color:#000;transform:scaleX(1.0182);">ongkos angkut galon</div>
<div class="t" style="left:739.03px;top:806.66px;font-size:13.40px;line-height:13.40px;color:#000;transform:scaleX(0.9629);">10.000,00</div>
<div class="t" style="left:832.44px;top:806.66px;font-size:13.40px;line-height:13.40px;color:#000;transform:scaleX(0.9223);">#REF!</div>
<svg style="position:absolute;left:804px;top:803px;" width="6" height="6" viewBox="0 0 6 6"><path d="M0 0 L6 0 L0 6 Z" fill="#107c10"/></svg>
<div class="t" style="left:102.82px;top:826.66px;font-size:13.40px;line-height:13.40px;color:#000;transform:scaleX(1.0158);">28/01/2026</div>
<div class="t" style="left:177.87px;top:826.66px;font-size:13.40px;line-height:13.40px;color:#000;transform:scaleX(0.9472);">Gojek PP Bank BCA</div>
<div class="t" style="left:102.96px;top:846.66px;font-size:13.40px;line-height:13.40px;color:#000;transform:scaleX(1.0137);">31/01/2026</div>
<div class="t" style="left:177.97px;top:846.66px;font-size:13.40px;line-height:13.40px;color:#000;transform:scaleX(0.9935);">qua 1+1 galon kosong</div>
<div class="t" style="left:739.49px;top:846.66px;font-size:13.40px;line-height:13.40px;color:#000;transform:scaleX(0.9552);">56.000,00</div>
<div class="t" style="left:832.44px;top:846.66px;font-size:13.40px;line-height:13.40px;color:#000;transform:scaleX(0.9223);">#REF!</div>
<svg style="position:absolute;left:804px;top:843px;" width="6" height="6" viewBox="0 0 6 6"><path d="M0 0 L6 0 L0 6 Z" fill="#107c10"/></svg>
<div class="t" style="left:102.96px;top:866.66px;font-size:13.40px;line-height:13.40px;color:#000;transform:scaleX(1.0137);">31/01/2026</div>
<div class="t" style="left:177.61px;top:866.66px;font-size:13.40px;line-height:13.40px;color:#000;transform:scaleX(1.0176);">reuimbest pak pei ke RS</div>
<div class="t" style="left:739.03px;top:866.66px;font-size:13.40px;line-height:13.40px;color:#000;transform:scaleX(0.9629);">15.000,00</div>
<div class="t" style="left:832.44px;top:866.66px;font-size:13.40px;line-height:13.40px;color:#000;transform:scaleX(0.9223);">#REF!</div>
<svg style="position:absolute;left:804px;top:863px;" width="6" height="6" viewBox="0 0 6 6"><path d="M0 0 L6 0 L0 6 Z" fill="#107c10"/></svg>
<div class="t" style="left:102.96px;top:886.66px;font-size:13.40px;line-height:13.40px;color:#000;transform:scaleX(1.0137);">31/01/2026</div>
<div class="t" style="left:620.79px;top:726.66px;font-size:13.40px;line-height:13.40px;color:#000;transform:scaleX(0.9605);">3.000.000,00</div>
<div class="t" style="left:27.33px;top:926.66px;font-size:13.40px;line-height:13.40px;color:#000;transform:scaleX(0.9044);">FEBRUARI</div>
<div class="t" style="left:898.56px;top:306.66px;font-size:13.40px;line-height:13.40px;color:#000;transform:scaleX(1.0786);">bon di devi</div>
<div class="t" style="left:832.44px;top:926.66px;font-size:13.40px;line-height:13.40px;color:#000;transform:scaleX(0.9223);">#REF!</div>
<svg style="position:absolute;left:804px;top:923px;" width="6" height="6" viewBox="0 0 6 6"><path d="M0 0 L6 0 L0 6 Z" fill="#107c10"/></svg>
<div class="t" style="left:832.44px;top:946.66px;font-size:13.40px;line-height:13.40px;color:#000;transform:scaleX(0.9223);">#REF!</div>
<svg style="position:absolute;left:804px;top:943px;" width="6" height="6" viewBox="0 0 6 6"><path d="M0 0 L6 0 L0 6 Z" fill="#107c10"/></svg>
<div class="t" style="left:832.44px;top:966.66px;font-size:13.40px;line-height:13.40px;color:#000;transform:scaleX(0.9223);">#REF!</div>
<svg style="position:absolute;left:804px;top:963px;" width="6" height="6" viewBox="0 0 6 6"><path d="M0 0 L6 0 L0 6 Z" fill="#107c10"/></svg>
<div class="t" style="left:832.44px;top:986.66px;font-size:13.40px;line-height:13.40px;color:#000;transform:scaleX(0.9223);">#REF!</div>
<svg style="position:absolute;left:804px;top:983px;" width="6" height="6" viewBox="0 0 6 6"><path d="M0 0 L6 0 L0 6 Z" fill="#107c10"/></svg>
<div style="left:895px;top:243px;width:3px;height:747px;background:#0000b8;"></div>
<svg style="position:absolute;left:0px;top:243px;" width="30" height="747" viewBox="0 0 30 747"><rect x="25.6" y="0" width="1.7" height="747" fill="#14149a"/></svg>
<div style="left:26px;top:921px;width:872px;height:3px;background:#0000b8;"></div>
<div style="left:174px;top:821px;width:438px;height:22px;background:transparent;box-sizing:border-box;border:2px solid #217346;"></div>
<div style="left:608px;top:840px;width:5px;height:5px;background:#217346;border:1px solid #fff;"></div>
<div style="left:297px;top:825px;width:1px;height:17px;background:#000;"></div>
<div style="left:0px;top:990px;width:1920px;height:28px;background:#e6e6e6;"></div>
<div style="left:0px;top:1018px;width:1920px;height:22px;background:#f3f3f3;"></div>
<div style="left:0px;top:1018px;width:1920px;height:1px;background:#d4d4d4;"></div>
<div style="left:0px;top:1040px;width:1920px;height:40px;background:#e1dddd;"></div>
<div style="left:49px;top:1041px;width:286px;height:39px;background:#ffffff;"></div>
<svg style="position:absolute;left:22px;top:10px;" width="15" height="15" viewBox="0 0 15 15"><path d="M0.5 0.5 H14.5 V14.5 H0.5 Z" fill="none" stroke="#fff" stroke-width="1.6"/><rect x="3" y="1" width="9" height="5" fill="#fff"/><rect x="3" y="9" width="9" height="5.5" fill="#fff"/><rect x="6" y="10.5" width="3" height="3" fill="#217346"/></svg>
<svg style="position:absolute;left:50px;top:9px;" width="16" height="16" viewBox="0 0 16 16"><path d="M5 1.5 L1.5 5 L5 8.5" fill="none" stroke="#fff" stroke-width="1.8"/><path d="M2 5 H9 Q14 5 14 9.5 Q14 14 9 14" fill="none" stroke="#fff" stroke-width="1.8"/></svg>
<svg style="position:absolute;left:69px;top:14px;" width="7" height="5" viewBox="0 0 7 5"><path d="M0.5 0.5 L6 0.5 L3.25 4 Z" fill="#fff"/></svg>
<svg style="position:absolute;left:86px;top:9px;" width="16" height="16" viewBox="0 0 16 16"><path d="M11 1.5 L14.5 5 L11 8.5" fill="none" stroke="#5a9a74" stroke-width="1.8"/><path d="M14 5 H7 Q2 5 2 9.5 Q2 14 7 14" fill="none" stroke="#5a9a74" stroke-width="1.8"/></svg>
<svg style="position:absolute;left:104px;top:14px;" width="7" height="5" viewBox="0 0 7 5"><path d="M0.5 0.5 L6 0.5 L3.25 4 Z" fill="#5a9a74"/></svg>
<svg style="position:absolute;left:122px;top:10px;" width="13" height="15" viewBox="0 0 13 15"><path d="M0.5 0.5 H8.5 L12.5 4.5 V14.5 H0.5 Z" fill="none" stroke="#5a9a74"/></svg>
<svg style="position:absolute;left:152px;top:10px;" width="9" height="10" viewBox="0 0 9 10"><line x1="0" y1="3.5" x2="8" y2="3.5" stroke="#fff" stroke-width="1.2"/><path d="M0.8 6 L4 9 L7.2 6" fill="none" stroke="#fff" stroke-width="1.3"/></svg>
<svg style="position:absolute;left:1752px;top:10px;" width="14" height="11" viewBox="0 0 14 11"><rect x="0.5" y="0.5" width="13" height="10" fill="none" stroke="#fff"/><line x1="0.5" y1="3" x2="13.5" y2="3" stroke="#fff"/><path d="M4.5 7.5 L7 5 L9.5 7.5 M7 5 V10" fill="none" stroke="#fff"/></svg>
<div style="left:1800px;top:15px;width:10px;height:1px;background:#fff;"></div>
<svg style="position:absolute;left:1846px;top:10px;" width="11" height="11" viewBox="0 0 11 11"><rect x="0.5" y="2.5" width="8" height="8" fill="none" stroke="#fff"/><path d="M2.5 2.5 V0.5 H10.5 V8.5 H8.5" fill="none" stroke="#fff"/></svg>
<svg style="position:absolute;left:1892px;top:10px;" width="11" height="11" viewBox="0 0 11 11"><path d="M0.5 0.5 L10.5 10.5 M10.5 0.5 L0.5 10.5" stroke="#fff" stroke-width="1.1"/></svg>
<svg style="position:absolute;left:1848px;top:41px;" width="17" height="17" viewBox="0 0 17 17"><circle cx="7" cy="5" r="4" fill="none" stroke="#fff" stroke-width="1.1"/><path d="M0.8 16 Q1.5 9.5 7 9.5 Q9.5 9.5 11 11" fill="none" stroke="#fff" stroke-width="1.1"/><path d="M12.5 11 V17 M9.5 14 H15.5" stroke="#fff" stroke-width="1.1"/></svg>
<svg style="position:absolute;left:578px;top:40px;" width="13" height="17" viewBox="0 0 13 17"><path d="M6.5 1 Q1 1 1 6 Q1 8.5 3 10.5 Q4 11.5 4 13 H9 Q9 11.5 10 10.5 Q12 8.5 12 6 Q12 1 6.5 1 Z" fill="none" stroke="#fff" stroke-width="1.1"/><line x1="4.5" y1="15" x2="8.5" y2="15" stroke="#fff"/></svg>
<svg style="position:absolute;left:17px;top:72px;" width="29" height="30" viewBox="0 0 29 30"><rect x="1" y="4" width="20" height="24" fill="#d9d9d9"/><rect x="6" y="2" width="10" height="4" fill="#bdbdbd"/><rect x="9" y="0" width="4" height="3" fill="#bdbdbd"/><path d="M12.5 12.5 H22.5 L27.5 17.5 V28.5 H12.5 Z" fill="#fafafa" stroke="#b8b8b8"/></svg>
<svg style="position:absolute;left:25px;top:125px;" width="7" height="5" viewBox="0 0 7 5"><path d="M0 0 H6 L3 3 Z" fill="#c0c0c0"/></svg>
<svg style="position:absolute;left:54px;top:71px;" width="15" height="14" viewBox="0 0 15 14"><path d="M4 0 L10 9 M11 0 L5 9" stroke="#505050" stroke-width="1.4"/><circle cx="3.5" cy="11" r="2.6" fill="none" stroke="#3c78b4" stroke-width="1.1"/><circle cx="11.5" cy="11" r="2.6" fill="none" stroke="#3c78b4" stroke-width="1.1"/></svg>
<svg style="position:absolute;left:53px;top:94px;" width="16" height="15" viewBox="0 0 16 15"><path d="M0.5 0.5 H6.5 L8.5 2.5 V11.5 H0.5 Z" fill="#fff" stroke="#505050"/><path d="M5.5 4.5 H12.5 L15.5 7.5 V14.5 H5.5 Z" fill="#fff" stroke="#3f6fa0"/><path d="M7.5 8.5 H13 M7.5 10.5 H13 M7.5 12.5 H13" stroke="#3f6fa0"/><path d="M2 3.5 H5 M2 5.5 H5 M2 7.5 H5" stroke="#505050"/></svg>
<svg style="position:absolute;left:110px;top:100px;" width="6" height="4" viewBox="0 0 6 4"><path d="M0 0 H6 L3 3 Z" fill="#505050"/></svg>
<svg style="position:absolute;left:54px;top:117px;" width="16" height="14" viewBox="0 0 16 14"><path d="M9 1 L15 6 L12 8 L7 4 Z" fill="#c8c8c8"/><path d="M7 5 L11 8.5 L6 13 L1.5 9.5 Z" fill="#d0d0d0"/></svg>
<svg style="position:absolute;left:153px;top:144px;" width="9" height="9" viewBox="0 0 9 9"><path d="M0.5 8.5 V0.5 H8.5" fill="none" stroke="#8a8a8a"/><path d="M3 3 L8 8 M8 4.5 V8 H4.5" fill="none" stroke="#8a8a8a"/></svg>
<svg style="position:absolute;left:367px;top:144px;" width="9" height="9" viewBox="0 0 9 9"><path d="M0.5 8.5 V0.5 H8.5" fill="none" stroke="#8a8a8a"/><path d="M3 3 L8 8 M8 4.5 V8 H4.5" fill="none" stroke="#8a8a8a"/></svg>
<svg style="position:absolute;left:638px;top:144px;" width="9" height="9" viewBox="0 0 9 9"><path d="M0.5 8.5 V0.5 H8.5" fill="none" stroke="#8a8a8a"/><path d="M3 3 L8 8 M8 4.5 V8 H4.5" fill="none" stroke="#8a8a8a"/></svg>
<svg style="position:absolute;left:785px;top:144px;" width="9" height="9" viewBox="0 0 9 9"><path d="M0.5 8.5 V0.5 H8.5" fill="none" stroke="#8a8a8a"/><path d="M3 3 L8 8 M8 4.5 V8 H4.5" fill="none" stroke="#8a8a8a"/></svg>
<svg style="position:absolute;left:258px;top:83px;" width="15" height="9" viewBox="0 0 15 9"><path d="M0.8 0.8 L7 7.5 L13.5 0.8" fill="none" stroke="#444" stroke-width="1.2"/></svg>
<svg style="position:absolute;left:310px;top:83px;" width="15" height="9" viewBox="0 0 15 9"><path d="M0.8 0.8 L7 7.5 L13.5 0.8" fill="none" stroke="#444" stroke-width="1.2"/></svg>
<div class="t" style="left:333.00px;top:78.03px;font-size:16.50px;line-height:16.50px;color:#444;">A</div>
<svg style="position:absolute;left:341px;top:77px;" width="6" height="4" viewBox="0 0 6 4"><path d="M0 3.5 L3 0 L6 3.5 Z" fill="#3c78b4"/></svg>
<div class="t" style="left:356.50px;top:81.00px;font-size:13.00px;line-height:13.00px;color:#444;transform:scaleX(0.9832);">A</div>
<svg style="position:absolute;left:363px;top:79px;" width="6" height="4" viewBox="0 0 6 4"><path d="M0 0 L6 0 L3 3.5 Z" fill="#444"/></svg>
<div class="t" style="left:179.20px;top:110.42px;font-size:12.50px;line-height:12.50px;color:#333;font-weight:bold;transform:scaleX(0.9836);">B</div>
<div class="t" style="left:202.19px;top:110.42px;font-size:12.50px;line-height:12.50px;color:#333;font-weight:bold;font-style:italic;">I</div>
<div class="t" style="left:222.65px;top:110.42px;font-size:12.50px;line-height:12.50px;color:#333;font-weight:bold;transform:scaleX(1.1333);">U</div>
<div style="left:223px;top:123px;width:10px;height:1px;background:#333;"></div>
<svg style="position:absolute;left:242px;top:117px;" width="6" height="4" viewBox="0 0 6 4"><path d="M0 0 H6 L3 3 Z" fill="#555"/></svg>
<div style="left:255px;top:106px;width:1px;height:22px;background:#d4d4d4;"></div>
<div style="left:298px;top:106px;width:1px;height:22px;background:#d4d4d4;"></div>
<svg style="position:absolute;left:264px;top:110px;" width="14" height="14" viewBox="0 0 14 14"><rect x="0.5" y="0.5" width="13" height="13" fill="none" stroke="#bbb" stroke-dasharray="1 1"/><path d="M7 0.5 V13.5 M0.5 7 H13.5" stroke="#bbb" stroke-dasharray="1 1"/><path d="M0.5 13.5 H13.5" stroke="#aaa"/></svg>
<svg style="position:absolute;left:285px;top:117px;" width="6" height="4" viewBox="0 0 6 4"><path d="M0 0 H6 L3 3 Z" fill="#bbb"/></svg>
<svg style="position:absolute;left:306px;top:109px;" width="17" height="16" viewBox="0 0 17 16"><path d="M3 8 L8 3 L14 9 L9 14 Z" fill="none" stroke="#bcbcbc" stroke-width="1.2"/><path d="M7 1 L7 7" stroke="#bcbcbc"/><rect x="1" y="14" width="14" height="2" fill="#e0e0e0"/></svg>
<svg style="position:absolute;left:328px;top:117px;" width="6" height="4" viewBox="0 0 6 4"><path d="M0 0 H6 L3 3 Z" fill="#bbb"/></svg>
<div class="t" style="left:344.50px;top:110.00px;font-size:13.00px;line-height:13.00px;color:#444;transform:scaleX(0.9254);">A</div>
<div style="left:340px;top:122px;width:16px;height:3px;background:#e00000;"></div>
<svg style="position:absolute;left:362px;top:117px;" width="6" height="4" viewBox="0 0 6 4"><path d="M0 0 H6 L3 3 Z" fill="#555"/></svg>
<svg style="position:absolute;left:391px;top:77px;" width="14" height="20" viewBox="0 0 14 20"><rect x="0" y="0" width="14" height="1" fill="#a8a8a8"/><rect x="0" y="3.5" width="14" height="1" fill="#a8a8a8"/><rect x="0" y="7" width="14" height="1" fill="#a8a8a8"/></svg>
<svg style="position:absolute;left:413px;top:81px;" width="14" height="20" viewBox="0 0 14 20"><rect x="0" y="0" width="14" height="1" fill="#a8a8a8"/><rect x="0" y="3.5" width="14" height="1" fill="#a8a8a8"/><rect x="0" y="7" width="14" height="1" fill="#a8a8a8"/></svg>
<svg style="position:absolute;left:435px;top:86px;" width="14" height="20" viewBox="0 0 14 20"><rect x="0" y="0" width="14" height="1" fill="#a8a8a8"/><rect x="0" y="3.5" width="14" height="1" fill="#a8a8a8"/><rect x="0" y="7" width="14" height="1" fill="#a8a8a8"/></svg>
<svg style="position:absolute;left:391px;top:112px;" width="14" height="20" viewBox="0 0 14 20"><rect x="0" y="0" width="14" height="1" fill="#a8a8a8"/><rect x="0" y="3" width="10" height="1" fill="#a8a8a8"/><rect x="0" y="6" width="14" height="1" fill="#a8a8a8"/><rect x="0" y="9" width="10" height="1" fill="#a8a8a8"/></svg>
<svg style="position:absolute;left:413px;top:112px;" width="14" height="20" viewBox="0 0 14 20"><rect x="0" y="0" width="14" height="1" fill="#a8a8a8"/><rect x="0" y="3" width="14" height="1" fill="#a8a8a8"/><rect x="0" y="6" width="14" height="1" fill="#a8a8a8"/><rect x="0" y="9" width="14" height="1" fill="#a8a8a8"/></svg>
<svg style="position:absolute;left:435px;top:112px;" width="14" height="20" viewBox="0 0 14 20"><rect x="0" y="0" width="14" height="1" fill="#a8a8a8"/><rect x="0" y="3" width="10" height="1" fill="#a8a8a8"/><rect x="0" y="6" width="14" height="1" fill="#a8a8a8"/><rect x="0" y="9" width="10" height="1" fill="#a8a8a8"/></svg>
<svg style="position:absolute;left:457px;top:76px;" width="1" height="21" viewBox="0 0 1 21"><rect width="1" height="21" fill="#d4d4d4"/></svg>
<svg style="position:absolute;left:457px;top:105px;" width="1" height="23" viewBox="0 0 1 23"><rect width="1" height="23" fill="#d4d4d4"/></svg>
<div style="left:510px;top:72px;width:1px;height:56px;background:#d4d4d4;"></div>
<svg style="position:absolute;left:465px;top:78px;" width="17" height="16" viewBox="0 0 17 16"><text x="1" y="9" font-size="8" fill="#b0b0b0" transform="rotate(-40 6 6)" font-family="Liberation Sans">ab</text><path d="M6 15 L15 4" stroke="#b0b0b0" stroke-width="1.2"/></svg>
<svg style="position:absolute;left:486px;top:86px;" width="5" height="3" viewBox="0 0 5 3"><path d="M0 0 H5 L2.5 2.5 Z" fill="#bbb"/></svg>
<svg style="position:absolute;left:464px;top:110px;" width="18" height="14" viewBox="0 0 18 14"><rect x="0" y="0" width="18" height="1" fill="#b0b0b0"/><rect x="8" y="4" width="10" height="1" fill="#b0b0b0"/><rect x="8" y="8" width="10" height="1" fill="#b0b0b0"/><rect x="0" y="12" width="18" height="1" fill="#b0b0b0"/><path d="M1 6.5 L5 4 V9 Z" fill="#b0b0b0"/><rect x="4" y="6" width="4" height="1" fill="#b0b0b0"/></svg>
<svg style="position:absolute;left:486px;top:110px;" width="18" height="14" viewBox="0 0 18 14"><rect x="0" y="0" width="18" height="1" fill="#b0b0b0"/><rect x="8" y="4" width="10" height="1" fill="#b0b0b0"/><rect x="8" y="8" width="10" height="1" fill="#b0b0b0"/><rect x="0" y="12" width="18" height="1" fill="#b0b0b0"/><path d="M7 6.5 L3 4 V9 Z" fill="#b0b0b0"/><rect x="0" y="6" width="4" height="1" fill="#b0b0b0"/></svg>
<svg style="position:absolute;left:520px;top:79px;" width="13" height="15" viewBox="0 0 13 15"><text x="0" y="7" font-size="8.5" fill="#b0b0b0" font-family="Liberation Sans">ab</text><text x="0" y="14.5" font-size="8.5" fill="#b0b0b0" font-family="Liberation Sans">c</text><path d="M6 11.5 H11 V9" fill="none" stroke="#b0b0b0"/></svg>
<svg style="position:absolute;left:518px;top:109px;" width="16" height="16" viewBox="0 0 16 16"><rect x="0.5" y="0.5" width="15" height="15" fill="none" stroke="#b0b0b0"/><path d="M0.5 5 H15.5 M0.5 10.5 H15.5 M8 0.5 V5 M8 10.5 V15.5" stroke="#b0b0b0"/><path d="M3 7.75 H13" stroke="#b0b0b0"/></svg>
<svg style="position:absolute;left:630px;top:116px;" width="7" height="4" viewBox="0 0 7 4"><path d="M0 0 H6 L3 3 Z" fill="#bbb"/></svg>
<svg style="position:absolute;left:772px;top:83px;" width="14" height="9" viewBox="0 0 14 9"><path d="M0.8 0.8 L7 7.5 L13.5 0.8" fill="none" stroke="#c0c0c0" stroke-width="1.1"/></svg>
<svg style="position:absolute;left:661px;top:109px;" width="17" height="16" viewBox="0 0 17 16"><rect x="0.5" y="0.5" width="15" height="9" fill="none" stroke="#b8b8b8" stroke-width="1.1"/><circle cx="8" cy="5" r="2.2" fill="none" stroke="#b8b8b8"/><rect x="4" y="12" width="9" height="3" fill="#d8d8d8"/></svg>
<svg style="position:absolute;left:684px;top:117px;" width="5" height="3" viewBox="0 0 5 3"><path d="M0 0 H5 L2.5 2.5 Z" fill="#bbb"/></svg>
<div class="t" style="left:696.45px;top:110.73px;font-size:14.50px;line-height:14.50px;color:#b4b4b4;transform:scaleX(1.0934);">%</div>
<div class="t" style="left:721.02px;top:109.15px;font-size:14.00px;line-height:14.00px;color:#b4b4b4;font-weight:bold;">,</div>
<div style="left:740px;top:104px;width:1px;height:24px;background:#d4d4d4;"></div>
<svg style="position:absolute;left:747px;top:108px;" width="16" height="16" viewBox="0 0 16 16"><text x="6" y="7" font-size="7.5" fill="#b0b0b0" font-family="Liberation Sans">.0</text><text x="4" y="15" font-size="7.5" fill="#b0b0b0" font-family="Liberation Sans">.00</text><path d="M1 4.5 H6 M3 2.5 L1 4.5 L3 6.5" fill="none" stroke="#b0b0b0"/></svg>
<svg style="position:absolute;left:769px;top:108px;" width="16" height="16" viewBox="0 0 16 16"><text x="3" y="7" font-size="7.5" fill="#b0b0b0" font-family="Liberation Sans">.00</text><text x="8" y="15" font-size="7.5" fill="#b0b0b0" font-family="Liberation Sans">.0</text><path d="M1 12.5 H6 M4 10.5 L6 12.5 L4 14.5" fill="none" stroke="#b0b0b0"/></svg>
<svg style="position:absolute;left:827px;top:72px;" width="30" height="30" viewBox="0 0 30 30"><rect x="0.5" y="0.5" width="28" height="24" fill="#fbfbfb" stroke="#b8b8b8"/><path d="M7.5 0.5 V24.5 M14.5 0.5 V24.5 M21.5 0.5 V24.5 M0.5 6.5 H28.5 M0.5 12.5 H28.5 M0.5 18.5 H28.5" stroke="#c8c8c8"/><rect x="8" y="1" width="6" height="23" fill="#c4bcc4"/><rect x="14" y="7" width="6" height="5" fill="#c4bcc4"/><rect x="14.5" y="15.5" width="14" height="13" fill="#fff" stroke="#b0b0b0"/><path d="M18 20 H25 M18 23 H25 M20 26 L23 17" stroke="#a8a8a8"/></svg>
<svg style="position:absolute;left:871px;top:127px;" width="5" height="3" viewBox="0 0 5 3"><path d="M0 0 H5 L2.5 2.5 Z" fill="#bbb"/></svg>
<svg style="position:absolute;left:892px;top:74px;" width="30" height="28" viewBox="0 0 30 28"><rect x="0.5" y="0.5" width="24" height="20" fill="#fbfbfb" stroke="#b8b8b8"/><path d="M6.5 0.5 V20.5 M12.5 0.5 V20.5 M18.5 0.5 V20.5 M0.5 5.5 H24.5 M0.5 10.5 H24.5 M0.5 15.5 H24.5" stroke="#c8c8c8"/><rect x="7" y="6" width="17" height="14" fill="#d8cfd8"/><path d="M29 6 Q30 8 28 10 L19 19 L15 16 L25 7 Q27 5 29 6 Z" fill="#b8b8b8"/><path d="M14 17 L18 20.5 Q16 25 9 27.5 Q10 21 14 17 Z" fill="#c4c4c4"/></svg>
<svg style="position:absolute;left:917px;top:127px;" width="5" height="3" viewBox="0 0 5 3"><path d="M0 0 H5 L2.5 2.5 Z" fill="#bbb"/></svg>
<svg style="position:absolute;left:1511px;top:72px;" width="27" height="28" viewBox="0 0 27 28"><rect x="0.5" y="0.5" width="14" height="5" fill="none" stroke="#b8b8b8"/><path d="M7.5 0.5 V5.5" stroke="#b8b8b8"/><rect x="10.5" y="8.5" width="16" height="5" fill="#d0d0d0" stroke="#c0c0c0"/><path d="M1 11 L4 8.5 V13.5 Z" fill="#b0b0b0"/><rect x="3" y="10.5" width="5" height="1" fill="#b0b0b0"/><rect x="0.5" y="16.5" width="14" height="10" fill="none" stroke="#b8b8b8"/><path d="M7.5 16.5 V26.5 M0.5 21.5 H14.5" stroke="#b8b8b8"/></svg>
<svg style="position:absolute;left:1552px;top:72px;" width="30" height="28" viewBox="0 0 30 28"><rect x="0.5" y="0.5" width="14" height="5" fill="none" stroke="#b8b8b8"/><path d="M7.5 0.5 V5.5" stroke="#b8b8b8"/><rect x="6.5" y="8.5" width="10" height="5" fill="#d0d0d0" stroke="#c0c0c0"/><path d="M14 7 L27 19 M27 7 L14 19" stroke="#c0c0c0" stroke-width="1.5"/><rect x="0.5" y="17.5" width="14" height="10" fill="none" stroke="#b8b8b8"/><path d="M7.5 17.5 V27.5 M0.5 22.5 H14.5" stroke="#b8b8b8"/></svg>
<svg style="position:absolute;left:1594px;top:70px;" width="29" height="32" viewBox="0 0 29 32"><path d="M1 3.5 H27 M1 0.5 V6.5 M27 0.5 V6.5 M3 3.5 L6 1 M3 3.5 L6 6 M25 3.5 L22 1 M25 3.5 L22 6" stroke="#3c6ea0" fill="none"/><rect x="0.5" y="9.5" width="27" height="18" fill="#fff" stroke="#555"/><path d="M7.5 9.5 V27.5 M14.5 9.5 V27.5 M20.5 9.5 V27.5 M0.5 15.5 H27.5 M0.5 21.5 H27.5" stroke="#999"/><rect x="8" y="12" width="6" height="8" fill="#3c78b4"/><path d="M0.5 27.5 V31 H8 L10 29 H17 L19 27.5" fill="none" stroke="#555"/></svg>
<svg style="position:absolute;left:1521px;top:127px;" width="6" height="4" viewBox="0 0 6 4"><path d="M0 0 H6 L3 3 Z" fill="#c0c0c0"/></svg>
<svg style="position:absolute;left:1561px;top:127px;" width="6" height="4" viewBox="0 0 6 4"><path d="M0 0 H6 L3 3 Z" fill="#c0c0c0"/></svg>
<svg style="position:absolute;left:1605px;top:127px;" width="6" height="4" viewBox="0 0 6 4"><path d="M0 0 H6 L3 3 Z" fill="#555"/></svg>
<svg style="position:absolute;left:1648px;top:70px;" width="16" height="15" viewBox="0 0 16 15"><path d="M15 3 V0.8 H1 L8 7.5 L1 14.2 H15 V12" fill="none" stroke="#333" stroke-width="1.8"/></svg>
<svg style="position:absolute;left:1728px;top:77px;" width="6" height="4" viewBox="0 0 6 4"><path d="M0 0 H6 L3 3 Z" fill="#555"/></svg>
<svg style="position:absolute;left:1649px;top:93px;" width="16" height="16" viewBox="0 0 16 16"><rect x="0.5" y="0.5" width="14" height="15" fill="#f8f8f8" stroke="#c0c0c0"/><rect x="1" y="1" width="13" height="2.5" fill="#c8c8c8"/><path d="M7.5 5 V13 M4.5 10 L7.5 13 L10.5 10" fill="none" stroke="#b0b0b0" stroke-width="1.3"/></svg>
<svg style="position:absolute;left:1688px;top:101px;" width="5" height="3" viewBox="0 0 5 3"><path d="M0 0 H5 L2.5 2.5 Z" fill="#c0c0c0"/></svg>
<svg style="position:absolute;left:1650px;top:117px;" width="13" height="13" viewBox="0 0 13 13"><path d="M8 0.5 L12.5 5 L5 12.5 L0.5 8 Z" fill="#e88a9e"/><path d="M3 10 L5 12 M2 9 L4 11" stroke="#fff"/></svg>
<svg style="position:absolute;left:1698px;top:124px;" width="6" height="4" viewBox="0 0 6 4"><path d="M0 0 H6 L3 3 Z" fill="#444"/></svg>
<svg style="position:absolute;left:1744px;top:72px;" width="30" height="28" viewBox="0 0 30 28"><text x="0" y="12" font-size="13" fill="#b8b8b8" font-family="Liberation Sans" font-weight="bold">A</text><text x="0" y="26" font-size="13" fill="#b8b8b8" font-family="Liberation Sans" font-weight="bold">Z</text><path d="M12 6 H29 L22.5 13 V20 H19 V13 Z" fill="#b8b8b8"/></svg>
<svg style="position:absolute;left:1772px;top:128px;" width="5" height="3" viewBox="0 0 5 3"><path d="M0 0 H5 L2.5 2.5 Z" fill="#c8c8c8"/></svg>
<svg style="position:absolute;left:1788px;top:71px;" width="28" height="28" viewBox="0 0 28 28"><circle cx="18" cy="10" r="8.2" fill="#fff" stroke="#3c6ea0" stroke-width="2"/><path d="M12 16 L2.5 25.5" stroke="#3c6ea0" stroke-width="3" stroke-linecap="round"/></svg>
<svg style="position:absolute;left:1818px;top:128px;" width="5" height="3" viewBox="0 0 5 3"><path d="M0 0 H5 L2.5 2.5 Z" fill="#444"/></svg>
<svg style="position:absolute;left:1902px;top:145px;" width="10" height="6" viewBox="0 0 10 6"><path d="M0.5 5.5 L5 1 L9.5 5.5" fill="none" stroke="#555"/></svg>
<div class="t" style="left:11.79px;top:173.83px;font-size:12.60px;line-height:12.60px;color:#333;transform:scaleX(0.9761);">C51</div>
<svg style="position:absolute;left:94px;top:177px;" width="8" height="5" viewBox="0 0 8 5"><path d="M0 0 H8 L4 4 Z" fill="#555"/></svg>
<div style="left:121px;top:175px;width:2px;height:2px;background:#a8a8a8;"></div>
<div style="left:121px;top:180px;width:2px;height:2px;background:#a8a8a8;"></div>
<div style="left:121px;top:185px;width:2px;height:2px;background:#a8a8a8;"></div>
<svg style="position:absolute;left:150px;top:175px;" width="12" height="11" viewBox="0 0 12 11"><path d="M1 1 L11 10 M11 1 L1 10" stroke="#555" stroke-width="1.3"/></svg>
<svg style="position:absolute;left:186px;top:175px;" width="14" height="11" viewBox="0 0 14 11"><path d="M1 6 L5 10 L13 1" fill="none" stroke="#555" stroke-width="2"/></svg>
<div class="t" style="left:221px;top:172px;font-size:14px;line-height:14px;color:#555;font-family:Liberation Serif;font-style:italic;">f<span style="font-size:11px">x</span></div>
<div class="t" style="left:261.36px;top:173.66px;font-size:13.40px;line-height:13.40px;color:#222;transform:scaleX(0.9488);">Gojek PP Bank BCA</div>
<svg style="position:absolute;left:1903px;top:176px;" width="8" height="5" viewBox="0 0 8 5"><path d="M0.5 4.5 L4 1 L7.5 4.5" fill="none" stroke="#555" stroke-width="1.3"/></svg>
<div style="left:1902px;top:225px;width:15px;height:15px;background:#fff;box-sizing:border-box;border:1px solid #ababab;"></div>
<svg style="position:absolute;left:1906px;top:230px;" width="7" height="4" viewBox="0 0 7 4"><path d="M0 4 L3.5 0 L7 4 Z" fill="#555"/></svg>
<div style="left:1901px;top:242px;width:17px;height:734px;background:#dadada;"></div>
<div style="left:1902px;top:270px;width:15px;height:53px;background:#fff;box-sizing:border-box;border:1px solid #ababab;"></div>
<div style="left:1902px;top:976px;width:15px;height:14px;background:#fff;box-sizing:border-box;border:1px solid #ababab;"></div>
<svg style="position:absolute;left:1906px;top:981px;" width="7" height="4" viewBox="0 0 7 4"><path d="M0 0 L3.5 4 L7 0 Z" fill="#555"/></svg>
<div style="left:0px;top:990px;width:1920px;height:1px;background:#a8a8a8;"></div>
<svg style="position:absolute;left:27px;top:999px;" width="5" height="8" viewBox="0 0 5 8"><path d="M4.5 0 L0 4 L4.5 8 Z" fill="#bdbdbd"/></svg>
<svg style="position:absolute;left:56px;top:999px;" width="5" height="8" viewBox="0 0 5 8"><path d="M0.5 0 L5 4 L0.5 8 Z" fill="#bdbdbd"/></svg>
<div style="left:100px;top:994px;width:1px;height:20px;background:#c6c6c6;"></div>
<div style="left:102px;top:992px;width:96px;height:24px;background:#ffff00;"></div>
<div style="left:199px;top:994px;width:1px;height:20px;background:#c6c6c6;"></div>
<div class="t" style="left:114.56px;top:998.16px;font-size:12.80px;line-height:12.80px;color:#262626;transform:scaleX(1.0142);">Rekapitulasi</div>
<div class="t" style="left:212.43px;top:998.16px;font-size:12.80px;line-height:12.80px;color:#444;transform:scaleX(1.0461);">Member Parkir</div>
<div style="left:314px;top:989px;width:53px;height:26px;background:#ffffff;box-sizing:border-box;border-left:1px solid #c6c6c6;border-right:1px solid #c6c6c6;"></div>
<div style="left:314px;top:1013px;width:53px;height:2px;background:#217346;"></div>
<div class="t" style="left:326.26px;top:998.16px;font-size:12.80px;line-height:12.80px;color:#217346;font-weight:bold;transform:scaleX(0.9897);">2026</div>
<div class="t" style="left:377.37px;top:998.16px;font-size:12.80px;line-height:12.80px;color:#444;transform:scaleX(0.9880);">2025</div>
<div class="t" style="left:429.36px;top:998.16px;font-size:12.80px;line-height:12.80px;color:#444;">2024</div>
<div class="t" style="left:482.38px;top:998.16px;font-size:12.80px;line-height:12.80px;color:#444;transform:scaleX(0.9697);">2023</div>
<div class="t" style="left:533.88px;top:998.16px;font-size:12.80px;line-height:12.80px;color:#444;transform:scaleX(0.9743);">2022</div>
<div class="t" style="left:585.37px;top:998.16px;font-size:12.80px;line-height:12.80px;color:#444;transform:scaleX(0.9903);">2021</div>
<div class="t" style="left:637.35px;top:998.16px;font-size:12.80px;line-height:12.80px;color:#444;transform:scaleX(1.0222);">2020</div>
<div class="t" style="left:693.85px;top:998.16px;font-size:12.80px;line-height:12.80px;color:#444;transform:scaleX(1.0087);">2019</div>
<div class="t" style="left:745.34px;top:998.16px;font-size:12.80px;line-height:12.80px;color:#444;transform:scaleX(1.0246);">2018</div>
<div class="t" style="left:797.35px;top:998.16px;font-size:12.80px;line-height:12.80px;color:#444;transform:scaleX(1.0110);">2017</div>
<div style="left:418px;top:994px;width:1px;height:20px;background:#c6c6c6;"></div>
<div style="left:470px;top:994px;width:1px;height:20px;background:#c6c6c6;"></div>
<div style="left:522px;top:994px;width:1px;height:20px;background:#c6c6c6;"></div>
<div style="left:574px;top:994px;width:1px;height:20px;background:#c6c6c6;"></div>
<div style="left:626px;top:994px;width:1px;height:20px;background:#c6c6c6;"></div>
<div style="left:678px;top:994px;width:1px;height:20px;background:#c6c6c6;"></div>
<div style="left:734px;top:994px;width:1px;height:20px;background:#c6c6c6;"></div>
<div style="left:786px;top:994px;width:1px;height:20px;background:#c6c6c6;"></div>
<div style="left:837px;top:994px;width:1px;height:20px;background:#c6c6c6;"></div>
<svg style="position:absolute;left:871px;top:996px;" width="16" height="16" viewBox="0 0 16 16"><circle cx="8" cy="8" r="7" fill="none" stroke="#666" stroke-width="1.2"/><path d="M8 4 V12 M4 8 H12" stroke="#666" stroke-width="1.4"/></svg>
<div style="left:1152px;top:998px;width:2px;height:2px;background:#a0a0a0;"></div>
<div style="left:1152px;top:1002px;width:2px;height:2px;background:#a0a0a0;"></div>
<div style="left:1152px;top:1006px;width:2px;height:2px;background:#a0a0a0;"></div>
<div style="left:1169px;top:997px;width:731px;height:15px;background:#dadada;box-sizing:border-box;border:1px solid #c6c6c6;"></div>
<div style="left:1169px;top:997px;width:16px;height:15px;background:#fff;box-sizing:border-box;border:1px solid #ababab;"></div>
<svg style="position:absolute;left:1174px;top:1000px;" width="5" height="8" viewBox="0 0 5 8"><path d="M4.5 0 L0 4 L4.5 8 Z" fill="#555"/></svg>
<div style="left:1184px;top:997px;width:592px;height:15px;background:#fff;box-sizing:border-box;border:1px solid #ababab;"></div>
<div style="left:1884px;top:997px;width:15px;height:15px;background:#fff;box-sizing:border-box;border:1px solid #ababab;"></div>
<svg style="position:absolute;left:1889px;top:1000px;" width="5" height="8" viewBox="0 0 5 8"><path d="M0.5 0 L5 4 L0.5 8 Z" fill="#555"/></svg>
<div class="t" style="left:7.57px;top:1021.50px;font-size:12.40px;line-height:12.40px;color:#333;transform:scaleX(0.9332);">Enter</div>
<svg style="position:absolute;left:1633px;top:1022px;" width="13" height="13" viewBox="0 0 13 13"><rect x="0.5" y="0.5" width="12" height="12" fill="none" stroke="#666"/><path d="M4.5 0.5 V12.5 M8.5 0.5 V12.5 M0.5 4.5 H12.5 M0.5 8.5 H12.5" stroke="#666"/></svg>
<svg style="position:absolute;left:1673px;top:1022px;" width="14" height="13" viewBox="0 0 14 13"><rect x="0.5" y="0.5" width="13" height="12" fill="none" stroke="#666"/><rect x="3.5" y="2.5" width="7" height="8" fill="none" stroke="#666"/><path d="M5 5 H9 M5 7.5 H9" stroke="#666"/></svg>
<svg style="position:absolute;left:1713px;top:1022px;" width="14" height="13" viewBox="0 0 14 13"><rect x="0.5" y="0.5" width="13" height="12" fill="none" stroke="#666"/><path d="M0.5 7.5 H13.5 M7.5 0.5 V7.5 M3.5 0.5 V5" stroke="#666"/></svg>
<div style="left:1746px;top:1028px;width:7px;height:1px;background:#888;"></div>
<div style="left:1759px;top:1029px;width:100px;height:1px;background:#999;"></div>
<div style="left:1809px;top:1026px;width:1px;height:6px;background:#888;"></div>
<svg style="position:absolute;left:1864px;top:1024px;" width="9" height="9" viewBox="0 0 9 9"><path d="M4.5 0 V9 M0 4.5 H9" stroke="#888"/></svg>
<div class="t" style="left:1885.01px;top:1021.50px;font-size:12.40px;line-height:12.40px;color:#aaa;transform:scaleX(0.8525);">100%</div>
<svg style="position:absolute;left:16px;top:1052px;" width="16" height="16" viewBox="0 0 16 16"><path d="M0 2.2 L6.8 1.3 V7.4 H0 Z M7.6 1.2 L16 0 V7.4 H7.6 Z M0 8.2 H6.8 V14.3 L0 13.4 Z M7.6 8.2 H16 V16 L7.6 14.8 Z" fill="#111"/></svg>
<svg style="position:absolute;left:60px;top:1052px;" width="17" height="17" viewBox="0 0 17 17"><circle cx="10.5" cy="6.5" r="5.2" fill="none" stroke="#222" stroke-width="1.3"/><path d="M6.8 10.2 L1 16" stroke="#222" stroke-width="1.5"/></svg>
<div class="t" style="left:88.71px;top:1053.73px;font-size:14.50px;line-height:14.50px;color:#333;">Type here to search</div>
<svg style="position:absolute;left:255px;top:1041px;" width="80" height="39" viewBox="0 0 80 39"><path d="M8 39 Q14 33 40 33 Q66 31 80 33 V39 Z" fill="#dcbd8c"/><path d="M14 12 Q14 8 17 5 L19 1.5 L22 3 Q26 3 29 6 Q34 10 38 11 Q48 11 55 12 Q60 13 60 18 Q60 23 56 25 L57 37 H55 L52 27 L53 37 H51 L49 25 Q42 25 37 24 L35 37 H33 L32 25 L31 37 H29 L28 23 Q26 19 23 15 L19 16 Q15 17 13.5 15 Z" fill="#e8e8f0" stroke="#9a9ab4" stroke-width="0.7"/><path d="M17 5 L19 1.5 M22 3 L24 8 M25 4 L27 10 M28 6 L30 12 M31 8 L34 16 M35 11 L36 20 M40 11 L41 22 M45 12 L45 23 M50 12 L50 23 M55 13 L54 21 M24 12 L29 22 M20 9 L26 12" stroke="#3a3a5c" stroke-width="1.5"/><path d="M13.5 14.5 L16 16" stroke="#222" stroke-width="2"/><path d="M59 14 Q63 22 65 30" fill="none" stroke="#3a3a5c" stroke-width="2.2"/></svg>
<svg style="position:absolute;left:350px;top:1047px;" width="26" height="26" viewBox="0 0 26 26"><defs><linearGradient id="eg" x1="0" y1="1" x2="1" y2="0"><stop offset="0" stop-color="#0b4fa8"/><stop offset="0.55" stop-color="#1e9ae0"/><stop offset="1" stop-color="#5ed86a"/></linearGradient></defs><circle cx="13" cy="13" r="12" fill="url(#eg)"/><path d="M13 13.5 Q17 12 20 15 Q19 19 15 19 Q11 19 11 16 Q11 14 13 13.5 Z" fill="#e1dddd"/><path d="M3 10 Q7 4 14 5 Q9 7 8 12 Q7 18 13 22 Q4 21 3 14 Z" fill="#0c4c9c" opacity="0.6"/></svg>
<svg style="position:absolute;left:400px;top:1048px;" width="28" height="26" viewBox="0 0 28 26"><circle cx="12" cy="12" r="11.5" fill="#e04a3a"/><path d="M12 12 L22 6.5 A11.5 11.5 0 0 1 14 23.3 Z" fill="#f4c20d"/><path d="M12 12 L14 23.3 A11.5 11.5 0 0 1 1.5 8 Z" fill="#2fa84f"/><circle cx="12" cy="12" r="5" fill="#4a8af4" stroke="#fff" stroke-width="1.6"/><circle cx="20" cy="19" r="7" fill="#7b4fc8"/><text x="16.5" y="23" font-size="10" fill="#fff" font-family="Liberation Sans">A</text></svg>
<svg style="position:absolute;left:449px;top:1048px;" width="24" height="24" viewBox="0 0 24 24"><defs><linearGradient id="fg" x1="0" y1="1" x2="1" y2="0"><stop offset="0" stop-color="#ff3a6e"/><stop offset="0.5" stop-color="#ff7a1a"/><stop offset="1" stop-color="#ffd23a"/></linearGradient></defs><circle cx="12" cy="12.5" r="11" fill="url(#fg)"/><circle cx="11.5" cy="13" r="5.5" fill="#7b3ce0"/><path d="M3 6 Q7 2 12 2.5 Q8 5 9 8 Q5 8 3 6 Z" fill="#ffb23a"/></svg>
<svg style="position:absolute;left:498px;top:1049px;" width="24" height="22" viewBox="0 0 24 22"><path d="M1 2 H8 L10 4 H23 V21 H1 Z" fill="#f7c948"/><rect x="1" y="7" width="22" height="14" fill="#fcd565"/><rect x="6" y="13" width="12" height="8" fill="#2d7fd3"/><rect x="9" y="16" width="6" height="5" fill="#fcd565"/></svg>
<div style="left:535px;top:1041px;width:45px;height:39px;background:#f3f1f1;"></div>
<svg style="position:absolute;left:546px;top:1048px;" width="26" height="24" viewBox="0 0 26 24"><rect x="8" y="1" width="17" height="22" rx="1.5" fill="#21a366"/><rect x="8" y="1" width="17" height="7" fill="#33c481"/><rect x="8" y="15" width="17" height="8" fill="#107c41"/><rect x="1" y="5" width="13" height="14" rx="1.5" fill="#185c37"/><path d="M4 8 L10.5 16 M10.5 8 L4 16" stroke="#fff" stroke-width="2"/></svg>
<svg style="position:absolute;left:595px;top:1048px;" width="26" height="24" viewBox="0 0 26 24"><rect x="8" y="1" width="17" height="22" rx="1.5" fill="#2b7cd3"/><rect x="8" y="1" width="17" height="7" fill="#41a5ee"/><rect x="8" y="15" width="17" height="8" fill="#185abd"/><rect x="1" y="5" width="13" height="14" rx="1.5" fill="#103f91"/><path d="M2.8 8 L4.8 16 L7.3 10 L9.8 16 L11.8 8" fill="none" stroke="#fff" stroke-width="1.5"/></svg>
<svg style="position:absolute;left:646px;top:1049px;" width="20" height="20" viewBox="0 0 20 20"><circle cx="10" cy="10" r="6.2" fill="none" stroke="#3a3a3a" stroke-width="3.2"/><path d="M10 0.5 V4 M10 16 V19.5 M0.5 10 H4 M16 10 H19.5 M3.3 3.3 L5.7 5.7 M14.3 14.3 L16.7 16.7 M16.7 3.3 L14.3 5.7 M5.7 14.3 L3.3 16.7" stroke="#3a3a3a" stroke-width="3"/></svg>
<svg style="position:absolute;left:695px;top:1048px;" width="22" height="24" viewBox="0 0 22 24"><rect x="0" y="0" width="22" height="24" rx="3" fill="#b30b00"/><path d="M4 18 Q8 14 10 8 Q11 4 11 3 Q10 1 9.5 3 Q9 7 13 13 Q16 16 19 16 Q20 15 17 14.5 Q12 15 6 19 Q4 20 4 18 Z" fill="none" stroke="#fff" stroke-width="1.3"/></svg>
<svg style="position:absolute;left:743px;top:1048px;" width="24" height="24" viewBox="0 0 24 24"><ellipse cx="10" cy="10" rx="9" ry="6" fill="none" stroke="#e05050" stroke-width="1" transform="rotate(-20 10 10)"/><path d="M9 3 L16 15 M16 4 L10 15" stroke="#555" stroke-width="1"/><circle cx="9" cy="19" r="3" fill="none" stroke="#3a90d8" stroke-width="1.6"/><circle cx="18" cy="19" r="3" fill="none" stroke="#3a90d8" stroke-width="1.6"/></svg>
<div style="left:344px;top:1078px;width:39px;height:2px;background:#3c78d0;"></div>
<div style="left:392px;top:1078px;width:40px;height:2px;background:#3c78d0;"></div>
<div style="left:441px;top:1078px;width:40px;height:2px;background:#3c78d0;"></div>
<div style="left:490px;top:1078px;width:40px;height:2px;background:#3c78d0;"></div>
<div style="left:535px;top:1078px;width:45px;height:2px;background:#3c78d0;"></div>
<div style="left:588px;top:1078px;width:40px;height:2px;background:#3c78d0;"></div>
<div style="left:637px;top:1078px;width:40px;height:2px;background:#3c78d0;"></div>
<div style="left:686px;top:1078px;width:40px;height:2px;background:#3c78d0;"></div>
<div style="left:735px;top:1078px;width:40px;height:2px;background:#3c78d0;"></div>
<svg style="position:absolute;left:1518px;top:1047px;" width="26" height="24" viewBox="0 0 26 24"><circle cx="11" cy="14" r="9" fill="#f5a623"/><ellipse cx="8" cy="9" rx="6" ry="4.5" fill="#b8c8e0"/><ellipse cx="14" cy="19" rx="7" ry="4" fill="#c8d8ec"/><circle cx="18" cy="6" r="5.5" fill="#d9342b"/><text x="15.3" y="9.5" font-size="8.5" fill="#fff" font-family="Liberation Sans" font-weight="bold">4</text></svg>
<div class="t" style="left:1549.77px;top:1053.13px;font-size:14.50px;line-height:14.50px;color:#222;transform:scaleX(0.9121);">30°C</div>
<div class="t" style="left:1587.99px;top:1053.13px;font-size:14.50px;line-height:14.50px;color:#222;transform:scaleX(0.9302);">Sebagian cerah</div>
<svg style="position:absolute;left:1707px;top:1054px;" width="12" height="8" viewBox="0 0 12 8"><path d="M0.7 7.3 L6 1.5 L11.3 7.3" fill="none" stroke="#222" stroke-width="1.3"/></svg>
<svg style="position:absolute;left:1732px;top:1052px;" width="14" height="16" viewBox="0 0 14 16"><rect x="1" y="4" width="8" height="7" rx="1" fill="none" stroke="#222" stroke-width="1.2"/><path d="M9 6.5 L13 4.5 V10.5 L9 8.5" fill="none" stroke="#222" stroke-width="1.1"/><path d="M2 1.5 Q7 -0.5 11 1.5 M2 14 Q7 16 11 14" fill="none" stroke="#555"/></svg>
<svg style="position:absolute;left:1753px;top:1053px;" width="17" height="15" viewBox="0 0 17 15"><rect x="3.5" y="2.5" width="13" height="9" fill="none" stroke="#222" stroke-width="1.1"/><path d="M10 11.5 V14 M6 14.5 H14" stroke="#222" stroke-width="1.1"/><rect x="0.5" y="0.5" width="5" height="5" fill="#eee" stroke="#222"/></svg>
<svg style="position:absolute;left:1776px;top:1052px;" width="18" height="16" viewBox="0 0 18 16"><path d="M1 5.5 H4 L8.5 1.5 V14.5 L4 10.5 H1 Z" fill="none" stroke="#222" stroke-width="1.1"/><path d="M11 5 Q13 8 11 11 M13.5 3 Q17 8 13.5 13" fill="none" stroke="#888" stroke-width="1.1"/></svg>
<div class="t" style="left:1817.57px;top:1043.37px;font-size:13.50px;line-height:13.50px;color:#222;transform:scaleX(0.8172);">15:22</div>
<div class="t" style="left:1802.53px;top:1061.57px;font-size:13.50px;line-height:13.50px;color:#222;transform:scaleX(0.8723);">31/01/2026</div>
<svg style="position:absolute;left:1877px;top:1052px;" width="30" height="24" viewBox="0 0 30 24"><path d="M1 1 H18 V13 H8 L4 17 V13 H1 Z" fill="#222"/><path d="M4 4.5 H15 M4 7.5 H15 M4 10 H12" stroke="#fff" stroke-width="1.1"/><circle cx="18" cy="15.5" r="7" fill="#e1dddd" stroke="#777" stroke-width="1.2"/><text x="15" y="19.5" font-size="10" fill="#222" font-family="Liberation Sans">3</text></svg>
<div style="left:1914px;top:1041px;width:1px;height:39px;background:#b8b4b4;"></div>
</body></html>
